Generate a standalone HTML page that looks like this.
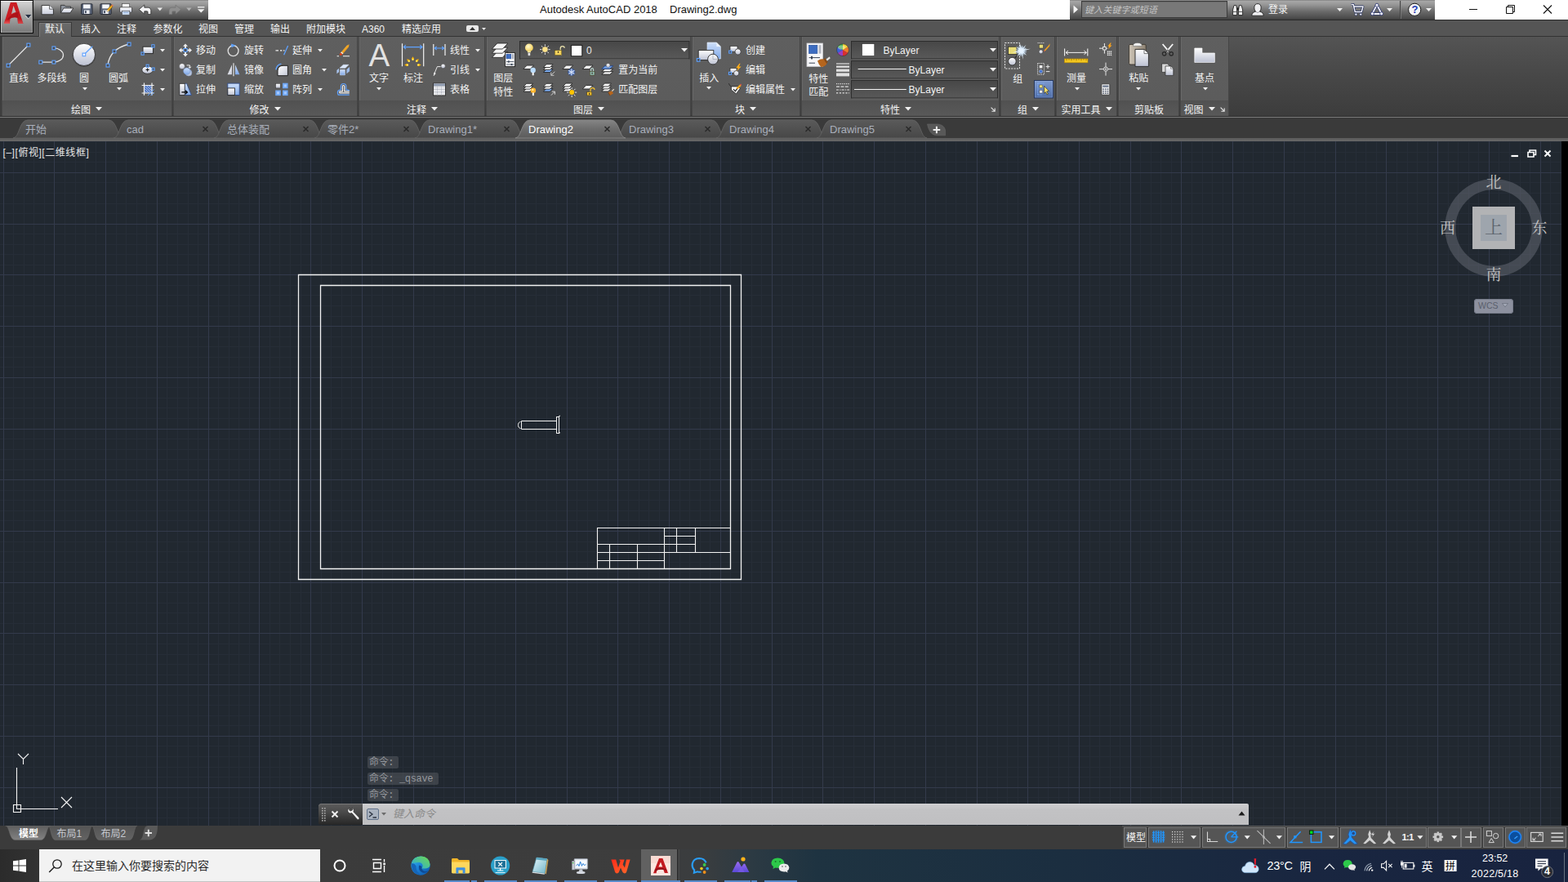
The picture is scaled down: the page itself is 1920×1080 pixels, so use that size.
<!DOCTYPE html>
<html lang="zh-CN"><head><meta charset="utf-8"><title>Autodesk AutoCAD 2018 - Drawing2.dwg</title>
<style>
html,body{margin:0;padding:0;}
body{width:1920px;height:1080px;overflow:hidden;position:relative;background:#212830;font-family:"Liberation Sans","Noto Sans CJK SC",sans-serif;}
.a{position:absolute;display:block;}
.t{position:absolute;white-space:nowrap;font-family:"Liberation Sans","Noto Sans CJK SC",sans-serif;}
svg{overflow:visible;}
</style></head>
<body>
<div class="a" style="left:0px;top:0px;width:1920px;height:24px;background:#fff;"></div>
<div class="a" style="left:40px;top:0px;width:215px;height:24px;background:linear-gradient(#6e6e6e 0,#a9a9a9 1px,#959595 6px,#6a6a6a 14px,#4c4c4c 22px,#3c3c3c 24px);"></div>
<span class="t" style="left:661px;top:4px;font-size:13px;line-height:16px;color:#111;">Autodesk AutoCAD 2018</span>
<span class="t" style="left:820px;top:4px;font-size:13px;line-height:16px;color:#111;">Drawing2.dwg</span>
<div class="a" style="left:1310px;top:0px;width:447px;height:24px;background:linear-gradient(#6e6e6e 0,#a9a9a9 1px,#959595 6px,#6a6a6a 14px,#4c4c4c 22px,#3c3c3c 24px);"></div>
<div class="a" style="left:1324px;top:1px;width:179px;height:21px;background:#787878;border:1px solid #3c3c3c;box-sizing:border-box;box-shadow:inset 0 1px 0 #6a6a6a;"></div>
<svg class="a" style="left:1313px;top:6px;" width="8" height="11" viewBox="0 0 8 11"><path d="M1.5 0.5V10.5L7 5.5Z" fill="#f4f4f4"/></svg>
<span class="t" style="left:1328px;top:4px;font-size:11px;line-height:16px;color:#c4c4c4;font-style:italic;letter-spacing:0.1px;">键入关键字或短语</span>
<span class="t" style="left:1553px;top:4px;font-size:12px;line-height:16px;color:#f0f0f0;">登录</span>
<svg class="a" style="left:1637.0px;top:10.0px;" width="7" height="4" viewBox="0 0 7 4"><path d="M0 0H7L3.5 4Z" fill="#f0f0f0"/></svg>
<svg class="a" style="left:1698.0px;top:10.0px;" width="7" height="4" viewBox="0 0 7 4"><path d="M0 0H7L3.5 4Z" fill="#f0f0f0"/></svg>
<svg class="a" style="left:1746.0px;top:10.0px;" width="7" height="4" viewBox="0 0 7 4"><path d="M0 0H7L3.5 4Z" fill="#f0f0f0"/></svg>
<div class="a" style="left:1714px;top:1px;width:1px;height:22px;background:#444;"></div>
<div class="a" style="left:1715px;top:1px;width:1px;height:22px;background:#8a8a8a;opacity:.6;"></div>
<svg class="a" style="left:1790px;top:0px;" width="130" height="24" viewBox="0 0 130 24"><path d="M9 11.5H19" stroke="#111" stroke-width="1" fill="none"/><path d="M54.5 8.5H62.5V16.5H54.5Z M56.5 8.5V6.5H64.5V14.5H62.5" stroke="#111" stroke-width="1" fill="none"/><path d="M100 6.5L110 16.5M110 6.5L100 16.5" stroke="#111" stroke-width="1.1" fill="none"/></svg>
<div class="a" style="left:0px;top:24px;width:1920px;height:21px;background:#555555;border-top:1px solid #2c2c2c;border-bottom:1px solid #333;box-sizing:border-box;"></div>
<div class="a" style="left:47px;top:27px;width:41px;height:18px;background:linear-gradient(#6b6b6b,#5f5f5f);border:1px solid #3a3a3a;border-bottom:none;box-sizing:border-box;box-shadow:inset 1px 1px 0 #7d7d7d;"></div>
<span class="t" style="left:55px;top:28px;font-size:12px;line-height:16px;color:#f2f2f2;">默认</span>
<span class="t" style="left:99px;top:28px;font-size:12px;line-height:16px;color:#f2f2f2;">插入</span>
<span class="t" style="left:143px;top:28px;font-size:12px;line-height:16px;color:#f2f2f2;">注释</span>
<span class="t" style="left:187.5px;top:28px;font-size:12px;line-height:16px;color:#f2f2f2;">参数化</span>
<span class="t" style="left:243px;top:28px;font-size:12px;line-height:16px;color:#f2f2f2;">视图</span>
<span class="t" style="left:287px;top:28px;font-size:12px;line-height:16px;color:#f2f2f2;">管理</span>
<span class="t" style="left:331px;top:28px;font-size:12px;line-height:16px;color:#f2f2f2;">输出</span>
<span class="t" style="left:375px;top:28px;font-size:12px;line-height:16px;color:#f2f2f2;">附加模块</span>
<span class="t" style="left:443px;top:28px;font-size:12px;line-height:16px;color:#f2f2f2;">A360</span>
<span class="t" style="left:492px;top:28px;font-size:12px;line-height:16px;color:#f2f2f2;">精选应用</span>
<div class="a" style="left:571px;top:31px;width:15px;height:8px;background:#e8e8e8;border-radius:2px;"></div>
<svg class="a" style="left:575px;top:33px;" width="7" height="4" viewBox="0 0 7 4"><path d="M0 4H7L3.5 0Z" fill="#333"/></svg>
<svg class="a" style="left:590.0px;top:34.0px;" width="5" height="3" viewBox="0 0 5 3"><path d="M0 0H5L2.5 3Z" fill="#e8e8e8"/></svg>
<div class="a" style="left:0px;top:0px;width:41px;height:41px;background:#0a0a0a;"></div>
<div class="a" style="left:1px;top:1px;width:39px;height:39px;background:linear-gradient(#d6d6d6,#a4a4a4 50%,#787878);box-shadow:inset 0 1px 0 #f6f6f6, inset 1px 0 0 #c4c4c4, inset -1px -1px 0 #959595;"></div>
<svg class="a" style="left:0px;top:0px;" width="41" height="41" viewBox="0 0 41 41"><defs><linearGradient id="ag" x1="0" y1="0" x2="1" y2="1"><stop offset="0" stop-color="#d0242a"/><stop offset=".55" stop-color="#c61b21"/><stop offset="1" stop-color="#aa141a"/></linearGradient><linearGradient id="ag2" x1="0" y1="0" x2="0" y2="1"><stop offset="0" stop-color="#c8191f"/><stop offset="1" stop-color="#f07070"/></linearGradient></defs><path d="M12.8 2.9H20.3L28.4 29.1H22.1L21.2 21.9Q16 20.4 12.5 22.7L11.8 29.1H4.9Z M16.5 7L14 17.2Q16.4 15.2 19.5 15Z" fill="url(#ag)" fill-rule="evenodd"/><path d="M8.6 23.4Q14.6 16.4 22.6 14.4L22.2 21.6Q16 19.6 9.6 24.6Z" fill="#a81218" opacity=".85"/><path d="M6.2 24.4L11.9 24L11.8 29.1H4.9Z" fill="url(#ag2)" opacity=".8"/><path d="M22 23L26.6 23.4L28.4 29.1H22.1Z" fill="url(#ag2)" opacity=".6"/><path d="M30.8 19H38.2L34.5 23.6Z" fill="#f4f4f4" opacity=".9"/></svg>
<svg class="a" style="left:30.8px;top:17.900000000000002px;" width="7.4" height="4.4" viewBox="0 0 7.4 4.4"><path d="M0 0H7.4L3.7 4.4Z" fill="#283244"/></svg>
<div class="a" style="left:0px;top:45px;width:1920px;height:98px;background:linear-gradient(#545454,#474747 50%,#3c3c3c);"></div>
<div class="a" style="left:0px;top:45px;width:2px;height:97px;background:#3e3e3e;"></div>
<div class="a" style="left:0px;top:143px;width:1920px;height:1px;background:#7c7c7c;"></div>
<div class="a" style="left:0px;top:142px;width:1920px;height:1px;background:#2e2e2e;"></div>
<div class="a" style="left:2px;top:45px;width:209px;height:97px;background:linear-gradient(#5f5f5f,#5b5b5b);box-sizing:border-box;border-left:1px solid #484848;border-right:1px solid #454545;box-shadow:inset 1px 0 0 #696969;"></div>
<div class="a" style="left:3px;top:123px;width:207px;height:19px;background:linear-gradient(#515151,#595959);"></div>
<span class="t" style="left:87.0px;top:126.6px;font-size:12px;line-height:16px;color:#f2f2f2;">绘图</span>
<svg class="a" style="left:117.0px;top:130.75px;" width="8" height="4.5" viewBox="0 0 8 4.5"><path d="M0 0H8L4.0 4.5Z" fill="#f0f0f0"/></svg>
<div class="a" style="left:212px;top:45px;width:225.5px;height:97px;background:linear-gradient(#5f5f5f,#5b5b5b);box-sizing:border-box;border-left:1px solid #484848;border-right:1px solid #454545;box-shadow:inset 1px 0 0 #696969;"></div>
<div class="a" style="left:213px;top:123px;width:223.5px;height:19px;background:linear-gradient(#515151,#595959);"></div>
<span class="t" style="left:305.5px;top:126.6px;font-size:12px;line-height:16px;color:#f2f2f2;">修改</span>
<svg class="a" style="left:336.0px;top:130.75px;" width="8" height="4.5" viewBox="0 0 8 4.5"><path d="M0 0H8L4.0 4.5Z" fill="#f0f0f0"/></svg>
<div class="a" style="left:438.5px;top:45px;width:155.5px;height:97px;background:linear-gradient(#5f5f5f,#5b5b5b);box-sizing:border-box;border-left:1px solid #484848;border-right:1px solid #454545;box-shadow:inset 1px 0 0 #696969;"></div>
<div class="a" style="left:439.5px;top:123px;width:153.5px;height:19px;background:linear-gradient(#515151,#595959);"></div>
<span class="t" style="left:498.0px;top:126.6px;font-size:12px;line-height:16px;color:#f2f2f2;">注释</span>
<svg class="a" style="left:528.0px;top:130.75px;" width="8" height="4.5" viewBox="0 0 8 4.5"><path d="M0 0H8L4.0 4.5Z" fill="#f0f0f0"/></svg>
<div class="a" style="left:595px;top:45px;width:251px;height:97px;background:linear-gradient(#5f5f5f,#5b5b5b);box-sizing:border-box;border-left:1px solid #484848;border-right:1px solid #454545;box-shadow:inset 1px 0 0 #696969;"></div>
<div class="a" style="left:596px;top:123px;width:249px;height:19px;background:linear-gradient(#515151,#595959);"></div>
<span class="t" style="left:702.0px;top:126.6px;font-size:12px;line-height:16px;color:#f2f2f2;">图层</span>
<svg class="a" style="left:732.0px;top:130.75px;" width="8" height="4.5" viewBox="0 0 8 4.5"><path d="M0 0H8L4.0 4.5Z" fill="#f0f0f0"/></svg>
<div class="a" style="left:847px;top:45px;width:132.5px;height:97px;background:linear-gradient(#5f5f5f,#5b5b5b);box-sizing:border-box;border-left:1px solid #484848;border-right:1px solid #454545;box-shadow:inset 1px 0 0 #696969;"></div>
<div class="a" style="left:848px;top:123px;width:130.5px;height:19px;background:linear-gradient(#515151,#595959);"></div>
<span class="t" style="left:900.0px;top:126.6px;font-size:12px;line-height:16px;color:#f2f2f2;">块</span>
<svg class="a" style="left:918.0px;top:130.75px;" width="8" height="4.5" viewBox="0 0 8 4.5"><path d="M0 0H8L4.0 4.5Z" fill="#f0f0f0"/></svg>
<div class="a" style="left:980.5px;top:45px;width:243.0px;height:97px;background:linear-gradient(#5f5f5f,#5b5b5b);box-sizing:border-box;border-left:1px solid #484848;border-right:1px solid #454545;box-shadow:inset 1px 0 0 #696969;"></div>
<div class="a" style="left:981.5px;top:123px;width:241.0px;height:19px;background:linear-gradient(#515151,#595959);"></div>
<span class="t" style="left:1078.0px;top:126.6px;font-size:12px;line-height:16px;color:#f2f2f2;">特性</span>
<svg class="a" style="left:1108.0px;top:130.75px;" width="8" height="4.5" viewBox="0 0 8 4.5"><path d="M0 0H8L4.0 4.5Z" fill="#f0f0f0"/></svg>
<svg class="a" style="left:1212.5px;top:130.5px;" width="6" height="6" viewBox="0 0 6 6"><path d="M0.6 0.6L4.8 4.8M5.2 1.4V5.2H1.4" stroke="#e8e8e8" stroke-width="1.1" fill="none"/></svg>
<div class="a" style="left:1224.5px;top:45px;width:67.5px;height:97px;background:linear-gradient(#5f5f5f,#5b5b5b);box-sizing:border-box;border-left:1px solid #484848;border-right:1px solid #454545;box-shadow:inset 1px 0 0 #696969;"></div>
<div class="a" style="left:1225.5px;top:123px;width:65.5px;height:19px;background:linear-gradient(#515151,#595959);"></div>
<span class="t" style="left:1246.0px;top:126.6px;font-size:12px;line-height:16px;color:#f2f2f2;">组</span>
<svg class="a" style="left:1264.0px;top:130.75px;" width="8" height="4.5" viewBox="0 0 8 4.5"><path d="M0 0H8L4.0 4.5Z" fill="#f0f0f0"/></svg>
<div class="a" style="left:1293px;top:45px;width:75px;height:97px;background:linear-gradient(#5f5f5f,#5b5b5b);box-sizing:border-box;border-left:1px solid #484848;border-right:1px solid #454545;box-shadow:inset 1px 0 0 #696969;"></div>
<div class="a" style="left:1294px;top:123px;width:73px;height:19px;background:linear-gradient(#515151,#595959);"></div>
<span class="t" style="left:1299.5px;top:126.6px;font-size:12px;line-height:16px;color:#f2f2f2;">实用工具</span>
<svg class="a" style="left:1354.0px;top:130.75px;" width="8" height="4.5" viewBox="0 0 8 4.5"><path d="M0 0H8L4.0 4.5Z" fill="#f0f0f0"/></svg>
<div class="a" style="left:1369px;top:45px;width:75px;height:97px;background:linear-gradient(#5f5f5f,#5b5b5b);box-sizing:border-box;border-left:1px solid #484848;border-right:1px solid #454545;box-shadow:inset 1px 0 0 #696969;"></div>
<div class="a" style="left:1370px;top:123px;width:73px;height:19px;background:linear-gradient(#515151,#595959);"></div>
<span class="t" style="left:1389.0px;top:126.6px;font-size:12px;line-height:16px;color:#f2f2f2;">剪贴板</span>
<div class="a" style="left:1445px;top:45px;width:60px;height:97px;background:linear-gradient(#5f5f5f,#5b5b5b);box-sizing:border-box;border-left:1px solid #484848;border-right:1px solid #454545;box-shadow:inset 1px 0 0 #696969;"></div>
<div class="a" style="left:1446px;top:123px;width:58px;height:19px;background:linear-gradient(#515151,#595959);"></div>
<span class="t" style="left:1449.5px;top:126.6px;font-size:12px;line-height:16px;color:#f2f2f2;">视图</span>
<svg class="a" style="left:1480.0px;top:130.75px;" width="8" height="4.5" viewBox="0 0 8 4.5"><path d="M0 0H8L4.0 4.5Z" fill="#f0f0f0"/></svg>
<svg class="a" style="left:1494px;top:130.5px;" width="6" height="6" viewBox="0 0 6 6"><path d="M0.6 0.6L4.8 4.8M5.2 1.4V5.2H1.4" stroke="#e8e8e8" stroke-width="1.1" fill="none"/></svg>
<div class="a" style="left:0px;top:144px;width:1920px;height:26px;background:#3a3a3a;"></div>
<div class="a" style="left:0px;top:169px;width:1920px;height:4px;background:linear-gradient(#5a5a5a,#686868);"></div>
<svg class="a" style="left:0px;top:146px;" width="1920" height="24" viewBox="0 0 1920 24"><defs><linearGradient id="ft0" x1="0" y1="0" x2="0" y2="1"><stop offset="0" stop-color="#5a5a5a"/><stop offset="1" stop-color="#474747"/></linearGradient><linearGradient id="ft1" x1="0" y1="0" x2="0" y2="1"><stop offset="0" stop-color="#858585"/><stop offset=".5" stop-color="#6c6c6c"/><stop offset="1" stop-color="#5c5c5c"/></linearGradient></defs><path d="M16 23 C24 23 23 1 34 1 H133 C144 1 143 23 151 23 Z" fill="url(#ft0)" stroke="#646464" stroke-width="0.8"/><path d="M139 23 C147 23 146 1 157 1 H256 C267 1 266 23 274 23 Z" fill="url(#ft0)" stroke="#646464" stroke-width="0.8"/><path d="M262 23 C270 23 269 1 280 1 H379 C390 1 389 23 397 23 Z" fill="url(#ft0)" stroke="#646464" stroke-width="0.8"/><path d="M385 23 C393 23 392 1 403 1 H502 C513 1 512 23 520 23 Z" fill="url(#ft0)" stroke="#646464" stroke-width="0.8"/><path d="M508 23 C516 23 515 1 526 1 H625 C636 1 635 23 643 23 Z" fill="url(#ft0)" stroke="#646464" stroke-width="0.8"/><path d="M754 23 C762 23 761 1 772 1 H871 C882 1 881 23 889 23 Z" fill="url(#ft0)" stroke="#646464" stroke-width="0.8"/><path d="M877 23 C885 23 884 1 895 1 H994 C1005 1 1004 23 1012 23 Z" fill="url(#ft0)" stroke="#646464" stroke-width="0.8"/><path d="M1000 23 C1008 23 1007 1 1018 1 H1117 C1128 1 1127 23 1135 23 Z" fill="url(#ft0)" stroke="#646464" stroke-width="0.8"/><path d="M631 23 C639 23 638 1 649 1 H748 C759 1 758 23 766 23 Z" fill="url(#ft1)" stroke="#8c8c8c" stroke-width="0.8"/><path d="M1135.5 6 H1147 C1153.5 6 1157.6 9.6 1157.6 15 V19.8 H1147.5 C1140.5 19.8 1137.2 14 1135.5 6Z" fill="#585858" stroke="#676767" stroke-width=".6"/><path d="M1142.6 13H1151.2M1146.9 8.7V17.3" stroke="#ececec" stroke-width="2"/><path d="M248.5 9L254.5 15M254.5 9L248.5 15" stroke="#2a2a2a" stroke-width="1.5"/><path d="M371.5 9L377.5 15M377.5 9L371.5 15" stroke="#2a2a2a" stroke-width="1.5"/><path d="M494.5 9L500.5 15M500.5 9L494.5 15" stroke="#2a2a2a" stroke-width="1.5"/><path d="M617.5 9L623.5 15M623.5 9L617.5 15" stroke="#2a2a2a" stroke-width="1.5"/><path d="M740.5 9L746.5 15M746.5 9L740.5 15" stroke="#2a2a2a" stroke-width="1.5"/><path d="M863.5 9L869.5 15M869.5 9L863.5 15" stroke="#2a2a2a" stroke-width="1.5"/><path d="M986.5 9L992.5 15M992.5 9L986.5 15" stroke="#2a2a2a" stroke-width="1.5"/><path d="M1109.5 9L1115.5 15M1115.5 9L1109.5 15" stroke="#2a2a2a" stroke-width="1.5"/></svg>
<span class="t" style="left:31px;top:151px;font-size:13px;line-height:16px;color:#a9afbb;">开始</span>
<span class="t" style="left:155px;top:151px;font-size:13px;line-height:16px;color:#a9afbb;">cad</span>
<span class="t" style="left:278px;top:151px;font-size:13px;line-height:16px;color:#a9afbb;">总体装配</span>
<span class="t" style="left:401px;top:151px;font-size:13px;line-height:16px;color:#a9afbb;">零件2*</span>
<span class="t" style="left:524px;top:151px;font-size:13px;line-height:16px;color:#a9afbb;">Drawing1*</span>
<span class="t" style="left:647px;top:151px;font-size:13px;line-height:16px;color:#ffffff;">Drawing2</span>
<span class="t" style="left:770px;top:151px;font-size:13px;line-height:16px;color:#a9afbb;">Drawing3</span>
<span class="t" style="left:893px;top:151px;font-size:13px;line-height:16px;color:#a9afbb;">Drawing4</span>
<span class="t" style="left:1016px;top:151px;font-size:13px;line-height:16px;color:#a9afbb;">Drawing5</span>
<div class="a" style="left:0px;top:173px;width:1920px;height:838px;background:#212830;"></div>
<svg class="a" style="left:0px;top:173px;shape-rendering:auto;" width="1920" height="838" viewBox="0 0 1920 838"><path d="M16.5 0V838M29.5 0V838M41.5 0V838M54.5 0V838M79.5 0V838M92.5 0V838M104.5 0V838M117.5 0V838M142.5 0V838M154.5 0V838M167.5 0V838M179.5 0V838M204.5 0V838M217.5 0V838M230.5 0V838M242.5 0V838M267.5 0V838M280.5 0V838M292.5 0V838M305.5 0V838M330.5 0V838M342.5 0V838M355.5 0V838M368.5 0V838M393.5 0V838M405.5 0V838M418.5 0V838M430.5 0V838M455.5 0V838M468.5 0V838M480.5 0V838M493.5 0V838M518.5 0V838M531.5 0V838M543.5 0V838M556.5 0V838M581.5 0V838M593.5 0V838M606.5 0V838M618.5 0V838M644.5 0V838M656.5 0V838M669.5 0V838M681.5 0V838M706.5 0V838M719.5 0V838M731.5 0V838M744.5 0V838M769.5 0V838M782.5 0V838M794.5 0V838M807.5 0V838M832.5 0V838M844.5 0V838M857.5 0V838M869.5 0V838M894.5 0V838M907.5 0V838M920.5 0V838M932.5 0V838M957.5 0V838M970.5 0V838M982.5 0V838M995.5 0V838M1020.5 0V838M1032.5 0V838M1045.5 0V838M1058.5 0V838M1083.5 0V838M1095.5 0V838M1108.5 0V838M1120.5 0V838M1145.5 0V838M1158.5 0V838M1170.5 0V838M1183.5 0V838M1208.5 0V838M1221.5 0V838M1233.5 0V838M1246.5 0V838M1271.5 0V838M1283.5 0V838M1296.5 0V838M1308.5 0V838M1334.5 0V838M1346.5 0V838M1359.5 0V838M1371.5 0V838M1396.5 0V838M1409.5 0V838M1421.5 0V838M1434.5 0V838M1459.5 0V838M1472.5 0V838M1484.5 0V838M1497.5 0V838M1522.5 0V838M1534.5 0V838M1547.5 0V838M1559.5 0V838M1584.5 0V838M1597.5 0V838M1610.5 0V838M1622.5 0V838M1647.5 0V838M1660.5 0V838M1672.5 0V838M1685.5 0V838M1710.5 0V838M1723.5 0V838M1735.5 0V838M1748.5 0V838M1773.5 0V838M1785.5 0V838M1798.5 0V838M1810.5 0V838M1835.5 0V838M1848.5 0V838M1861.5 0V838M1873.5 0V838M1898.5 0V838M1911.5 0V838M0 0.5H1912M0 13.5H1912M0 25.5H1912M0 50.5H1912M0 63.5H1912M0 76.5H1912M0 88.5H1912M0 113.5H1912M0 126.5H1912M0 138.5H1912M0 151.5H1912M0 176.5H1912M0 188.5H1912M0 201.5H1912M0 214.5H1912M0 239.5H1912M0 251.5H1912M0 264.5H1912M0 276.5H1912M0 301.5H1912M0 314.5H1912M0 326.5H1912M0 339.5H1912M0 364.5H1912M0 377.5H1912M0 389.5H1912M0 402.5H1912M0 427.5H1912M0 439.5H1912M0 452.5H1912M0 464.5H1912M0 490.5H1912M0 502.5H1912M0 515.5H1912M0 527.5H1912M0 552.5H1912M0 565.5H1912M0 577.5H1912M0 590.5H1912M0 615.5H1912M0 628.5H1912M0 640.5H1912M0 653.5H1912M0 678.5H1912M0 690.5H1912M0 703.5H1912M0 715.5H1912M0 740.5H1912M0 753.5H1912M0 766.5H1912M0 778.5H1912M0 803.5H1912M0 816.5H1912M0 828.5H1912" stroke="#262d37" stroke-width="1" fill="none"/><path d="M4.5 0V838M66.5 0V838M129.5 0V838M192.5 0V838M255.5 0V838M317.5 0V838M380.5 0V838M443.5 0V838M506.5 0V838M568.5 0V838M631.5 0V838M694.5 0V838M756.5 0V838M819.5 0V838M882.5 0V838M945.5 0V838M1007.5 0V838M1070.5 0V838M1133.5 0V838M1196.5 0V838M1258.5 0V838M1321.5 0V838M1384.5 0V838M1446.5 0V838M1509.5 0V838M1572.5 0V838M1635.5 0V838M1697.5 0V838M1760.5 0V838M1823.5 0V838M1886.5 0V838M0 38.5H1912M0 101.5H1912M0 163.5H1912M0 226.5H1912M0 289.5H1912M0 352.5H1912M0 414.5H1912M0 477.5H1912M0 540.5H1912M0 602.5H1912M0 665.5H1912M0 728.5H1912M0 791.5H1912" stroke="#333a4b" stroke-width="1" fill="none"/><path d="M365.5 163.5H907.5V536.5H365.5ZM392.5 176.5H894.5V523.5H392.5Z" stroke="#f2f2f2" stroke-width="1.3" fill="none"/><path d="M731.5 523.5V473.5H894.5M813.5 473.5V523.5M828.5 473.5V503.5M851.5 473.5V503.5M813.5 483.5H851.5M731.5 493.5H851.5M731.5 503.5H894.5M731.5 513.5H813.5M746.5 493.5V523.5M780.5 493.5V523.5" stroke="#f2f2f2" stroke-width="1.1" fill="none"/><path d="M638.5 342.5H681.5M638.5 352.5H681.5M638.5 342.5V352.5M637.5 343.5C633.5 343.5 633.5 351.5 637.5 351.5M681.5 337V358M684.5 337V358M681.5 337.5H684.5M681.5 357.5H684.5M684 337L686 336M684 358L686 356.5" stroke="#f2f2f2" stroke-width="1" fill="none"/><path d="M20.5 767V817.5H71M16.5 812.5H25.5V821.5H16.5ZM22 750L28.5 756.5L35 750M28.5 756.5V763M75 803L88 816M88 803L75 816" stroke="#f4f4f4" stroke-width="1.1" fill="none"/></svg>
<div class="a" style="left:1912px;top:173px;width:8px;height:838px;background:#000;"></div>
<span class="t" style="left:3.5px;top:179.3px;font-size:12px;line-height:16px;color:#e6e6e6;letter-spacing:0.55px;">[–][俯视][二维线框]</span>
<svg class="a" style="left:1848px;top:181px;" width="56" height="14" viewBox="0 0 56 14"><path d="M2.5 10H11" stroke="#fff" stroke-width="2.2"/><path d="M23 5.5H30V11H23Z M25 5V3H32.5V8.5H30.5" stroke="#fff" stroke-width="1.6" fill="none"/><path d="M43.5 3.5L50.5 10.5M50.5 3.5L43.5 10.5" stroke="#fff" stroke-width="2"/></svg>
<svg class="a" style="left:1764px;top:214px;" width="130" height="130" viewBox="0 0 130 130"><circle cx="65" cy="65" r="53.2" fill="none" stroke="#9aa0aa" stroke-opacity=".29" stroke-width="13"/><rect x="39" y="39" width="52" height="52" fill="#b2b3b5"/><rect x="49" y="49" width="32" height="32" fill="#9ea5ad"/></svg>
<span class="t" style="left:1809.0px;width:40px;text-align:center;top:213px;font-size:19px;line-height:22px;color:#c4c4c4;font-family:'Liberation Serif','Noto Serif CJK SC',serif;">北</span>
<span class="t" style="left:1809.0px;width:40px;text-align:center;top:326px;font-size:19px;line-height:22px;color:#c4c4c4;font-family:'Liberation Serif','Noto Serif CJK SC',serif;">南</span>
<span class="t" style="left:1752.5px;width:40px;text-align:center;top:269px;font-size:19px;line-height:22px;color:#c4c4c4;font-family:'Liberation Serif','Noto Serif CJK SC',serif;">西</span>
<span class="t" style="left:1865.0px;width:40px;text-align:center;top:269px;font-size:19px;line-height:22px;color:#c4c4c4;font-family:'Liberation Serif','Noto Serif CJK SC',serif;">东</span>
<span class="t" style="left:1809.0px;width:40px;text-align:center;top:266px;font-size:22px;line-height:26px;color:#5d646e;font-family:'Liberation Serif','Noto Serif CJK SC',serif;">上</span>
<div class="a" style="left:1805px;top:366px;width:48px;height:17.5px;background:#8d919f;border-radius:4px;box-shadow:inset 0 0 0 1px #777c8a;"></div>
<span class="t" style="left:1810px;top:367px;font-size:10.5px;line-height:15px;color:#5a5f6c;">WCS</span>
<svg class="a" style="left:1839px;top:371px;" width="8" height="6" viewBox="0 0 8 6"><path d="M0.5 0.5H7.5L4 5Z" fill="#a3a8b6" stroke="#666b78" stroke-width=".7"/></svg>
<div class="a" style="left:450px;top:926px;width:37.5px;height:15px;background:rgba(125,128,132,.30);border-radius:2.5px;"></div>
<span class="t" style="left:452px;top:925.5px;font-size:12px;line-height:16px;color:#94979c;font-family:'Liberation Mono','Noto Sans CJK SC',monospace;letter-spacing:-0.35px;">命令:</span>
<div class="a" style="left:450px;top:946px;width:86.5px;height:15px;background:rgba(125,128,132,.30);border-radius:2.5px;"></div>
<span class="t" style="left:452px;top:945.5px;font-size:12px;line-height:16px;color:#94979c;font-family:'Liberation Mono','Noto Sans CJK SC',monospace;letter-spacing:-0.35px;">命令: _qsave</span>
<div class="a" style="left:450px;top:966px;width:37.5px;height:15px;background:rgba(125,128,132,.30);border-radius:2.5px;"></div>
<span class="t" style="left:452px;top:965.5px;font-size:12px;line-height:16px;color:#94979c;font-family:'Liberation Mono','Noto Sans CJK SC',monospace;letter-spacing:-0.35px;">命令:</span>
<div class="a" style="left:390px;top:984px;width:54.5px;height:26px;background:linear-gradient(#5c5c5c,#4a4a4a 40%,#262626);border-radius:4px 0 0 3px;box-shadow:inset 0 1px 0 #767676;"></div>
<div class="a" style="left:444px;top:984px;width:1084.5px;height:26px;background:linear-gradient(#cfcfd1,#c2c2c4 30%,#bfbfc1);border-radius:0 2px 0 0;"></div>
<svg class="a" style="left:394px;top:989px;" width="6" height="18" viewBox="0 0 6 18"><rect x="0" y="0" width="1.6" height="1.6" fill="#a8a8a8"/><rect x="0" y="3" width="1.6" height="1.6" fill="#a8a8a8"/><rect x="0" y="6" width="1.6" height="1.6" fill="#a8a8a8"/><rect x="0" y="9" width="1.6" height="1.6" fill="#a8a8a8"/><rect x="0" y="12" width="1.6" height="1.6" fill="#a8a8a8"/><rect x="0" y="15" width="1.6" height="1.6" fill="#a8a8a8"/><rect x="3" y="0" width="1.6" height="1.6" fill="#a8a8a8"/><rect x="3" y="3" width="1.6" height="1.6" fill="#a8a8a8"/><rect x="3" y="6" width="1.6" height="1.6" fill="#a8a8a8"/><rect x="3" y="9" width="1.6" height="1.6" fill="#a8a8a8"/><rect x="3" y="12" width="1.6" height="1.6" fill="#a8a8a8"/><rect x="3" y="15" width="1.6" height="1.6" fill="#a8a8a8"/></svg>
<svg class="a" style="left:405px;top:992px;" width="10" height="10" viewBox="0 0 10 10"><path d="M1.5 1.5L8.5 8.5M8.5 1.5L1.5 8.5" stroke="#f0f0f0" stroke-width="1.9"/></svg>
<svg class="a" style="left:425px;top:988px;" width="16" height="17" viewBox="0 0 16 17"><path d="M3 1.2 A3.6 3.6 0 0 0 1.4 6.6 A3.6 3.6 0 0 0 5.8 7.6 L12.2 15 A1.5 1.5 0 0 0 14.6 13 L7.8 6 A3.6 3.6 0 0 0 6.2 1 L6.6 3.8 L4.6 5 L2.6 4 Z" fill="#f4f4f4" stroke="#1e1e1e" stroke-width=".6"/></svg>
<div class="a" style="left:449px;top:990px;width:15px;height:14px;background:#a9b2bf;border:1px solid #63738b;border-radius:2px;box-sizing:border-box;"></div>
<svg class="a" style="left:451px;top:993px;" width="11" height="9" viewBox="0 0 11 9"><path d="M1 1L5 4L1 7M5.5 8H10" stroke="#2c3340" stroke-width="1.3" fill="none"/></svg>
<svg class="a" style="left:467.0px;top:994.75px;" width="6" height="3.5" viewBox="0 0 6 3.5"><path d="M0 0H6L3.0 3.5Z" fill="#6b6b6b"/></svg>
<span class="t" style="left:481px;top:988px;font-size:13px;line-height:17px;color:#8a8a8a;font-style:italic;">键入命令</span>
<svg class="a" style="left:1516px;top:993px;" width="9" height="6" viewBox="0 0 9 6"><path d="M0.5 5.5H8.5L4.5 0.5Z" fill="#1a1a1a"/></svg>
<div class="a" style="left:0px;top:1011px;width:1920px;height:29px;background:#3b3b3b;"></div>
<svg class="a" style="left:0px;top:1011px;overflow:hidden;" width="200" height="19" viewBox="0 0 200 19"><defs><linearGradient id="lt1" x1="0" y1="0" x2="0" y2="1"><stop offset="0" stop-color="#5e5e5e"/><stop offset="1" stop-color="#828282"/></linearGradient><linearGradient id="lt0" x1="0" y1="0" x2="0" y2="1"><stop offset="0" stop-color="#545454"/><stop offset="1" stop-color="#636363"/></linearGradient></defs><path d="M58.5 0 C62.625 0 61.875 17.6 68.0 17.6 H104.0 C110.125 17.6 109.375 0 113.5 0 Z" fill="url(#lt0)" stroke="#6a6a6a" stroke-width=".5"/><path d="M112 0 C116.125 0 115.375 17.6 121.5 17.6 H158.5 C164.625 17.6 163.875 0 168 0 Z" fill="url(#lt0)" stroke="#6a6a6a" stroke-width=".5"/><path d="M170.6 17.4 C177 17.4 174 0 181 0 H193 C193 11 190 17.4 183 17.4Z" fill="#595959"/><path d="M6.5 0 C12.0 0 11.0 17.6 18.5 17.6 H50 C57.5 17.6 56.5 0 62 0 Z" fill="url(#lt1)" stroke="#6a6a6a" stroke-width=".5"/><path d="M177.6 9H186M181.8 4.8V13.2" stroke="#e0e0e0" stroke-width="1.9"/></svg>
<span class="t" style="left:23px;top:1013px;font-size:12px;line-height:16px;color:#ffffff;font-weight:bold;">模型</span>
<span class="t" style="left:69.5px;top:1013px;font-size:12px;line-height:16px;color:#c6c9d0;">布局1</span>
<span class="t" style="left:123.5px;top:1013px;font-size:12px;line-height:16px;color:#c6c9d0;">布局2</span>
<div class="a" style="left:1374px;top:1011px;width:546px;height:28px;background:#414141;border-top:1px solid #5c5c5c;box-sizing:border-box;"></div>
<div class="a" style="left:1375.5px;top:1012.5px;width:28.5px;height:25px;background:#555555;box-shadow:inset 0 0 0 1px #787878;"></div>
<div class="a" style="left:1405.5px;top:1012.5px;width:64.5px;height:25px;background:#555555;box-shadow:inset 0 0 0 1px #787878;"></div>
<div class="a" style="left:1471.5px;top:1012.5px;width:102.5px;height:25px;background:#555555;box-shadow:inset 0 0 0 1px #787878;"></div>
<div class="a" style="left:1575.5px;top:1012.5px;width:63.5px;height:25px;background:#555555;box-shadow:inset 0 0 0 1px #787878;"></div>
<div class="a" style="left:1640.5px;top:1012.5px;width:106.0px;height:25px;background:#555555;box-shadow:inset 0 0 0 1px #787878;"></div>
<div class="a" style="left:1748px;top:1012.5px;width:40.5px;height:25px;background:#555555;box-shadow:inset 0 0 0 1px #787878;"></div>
<div class="a" style="left:1789px;top:1012.5px;width:24.5px;height:25px;background:#555555;box-shadow:inset 0 0 0 1px #787878;"></div>
<div class="a" style="left:1815.5px;top:1012.5px;width:25.5px;height:25px;background:#555555;box-shadow:inset 0 0 0 1px #787878;"></div>
<div class="a" style="left:1842.5px;top:1012.5px;width:25.0px;height:25px;background:#555555;box-shadow:inset 0 0 0 1px #787878;"></div>
<div class="a" style="left:1869px;top:1012.5px;width:49px;height:25px;background:#555555;box-shadow:inset 0 0 0 1px #787878;"></div>
<span class="t" style="left:1379px;top:1017.5px;font-size:12px;line-height:16px;color:#f4f4f4;">模型</span>
<div class="a" style="left:0px;top:1040px;width:1920px;height:40px;background:linear-gradient(90deg,#2b2b2b 0,#333 48px,#3b3b3b 400px,#3d3d3d 780px,#3a3d3f 860px,#2c3a43 920px,#1e3341 1000px,#1b2e40 1300px,#192640 1600px,#18233f 1920px);"></div>
<svg class="a" style="left:16px;top:1052px;" width="16" height="16" viewBox="0 0 16 16"><path d="M0 2.3L6.5 1.4V7.5H0ZM7.5 1.25L16 0V7.5H7.5ZM0 8.5H6.5V14.6L0 13.7ZM7.5 8.5H16V16L7.5 14.75Z" fill="#fff"/></svg>
<div class="a" style="left:48px;top:1040px;width:344px;height:40px;background:#f2f2f2;border-top:1px solid #fafafa;border-bottom:1px solid #c4c4c4;box-sizing:border-box;"></div>
<svg class="a" style="left:59px;top:1051px;" width="18" height="18" viewBox="0 0 18 18"><circle cx="11" cy="7" r="5.2" fill="none" stroke="#1a1a1a" stroke-width="1.3"/><path d="M7.4 10.8L1.2 17" stroke="#1a1a1a" stroke-width="1.4"/></svg>
<span class="t" style="left:88px;top:1050px;font-size:14px;line-height:20px;color:#2a2a2a;">在这里输入你要搜索的内容</span>
<svg class="a" style="left:406px;top:1050px;" width="20" height="20" viewBox="0 0 20 20"><circle cx="10" cy="10" r="6.5" fill="none" stroke="#fff" stroke-width="2"/></svg>
<svg class="a" style="left:454px;top:1051px;" width="20" height="18" viewBox="0 0 20 18"><path d="M2 1.5H13M2 16.5H13M3.5 5.5H12.5V12.5H3.5ZM16.5 1V4.5M16.5 9V17" stroke="#fff" stroke-width="1.4" fill="none"/><rect x="15.3" y="5.6" width="2.6" height="2.6" fill="#fff"/></svg>
<div class="a" style="left:785px;top:1040px;width:44px;height:40px;background:#616161;"></div>
<div class="a" style="left:829px;top:1040px;width:1px;height:40px;background:#2b2b2b;"></div>
<div class="a" style="left:831px;top:1040px;width:1px;height:40px;background:#4a4a4a;"></div>
<div class="a" style="left:544px;top:1078px;width:31px;height:2px;background:#588bcb;"></div>
<div class="a" style="left:576.5px;top:1078px;width:7.0px;height:2px;background:#588bcb;"></div>
<div class="a" style="left:593px;top:1078px;width:40px;height:2px;background:#588bcb;"></div>
<div class="a" style="left:642px;top:1078px;width:40px;height:2px;background:#588bcb;"></div>
<div class="a" style="left:691px;top:1078px;width:40px;height:2px;background:#588bcb;"></div>
<div class="a" style="left:740px;top:1078px;width:40px;height:2px;background:#588bcb;"></div>
<div class="a" style="left:785px;top:1078px;width:48px;height:2px;background:#588bcb;"></div>
<div class="a" style="left:838px;top:1078px;width:40px;height:2px;background:#588bcb;"></div>
<div class="a" style="left:887px;top:1078px;width:31.5px;height:2px;background:#588bcb;"></div>
<div class="a" style="left:919.5px;top:1078px;width:7.5px;height:2px;background:#588bcb;"></div>
<div class="a" style="left:936px;top:1078px;width:40px;height:2px;background:#588bcb;"></div>
<svg class="a" style="left:0px;top:0px;" width="1920" height="146" viewBox="0 0 1920 146"><defs><linearGradient id="gw" x1="0" y1="0" x2="0" y2="1"><stop offset="0" stop-color="#ffffff"/><stop offset="1" stop-color="#bcc1d2"/></linearGradient><linearGradient id="gw2" x1="0" y1="0" x2="1" y2="1"><stop offset="0" stop-color="#ffffff"/><stop offset="1" stop-color="#c4c8d6"/></linearGradient><linearGradient id="gbl" x1="0" y1="0" x2="0" y2="1"><stop offset="0" stop-color="#cfe0fa"/><stop offset="1" stop-color="#7fa8e8"/></linearGradient><linearGradient id="gy" x1="0" y1="0" x2="0" y2="1"><stop offset="0" stop-color="#ffe680"/><stop offset="1" stop-color="#e8b400"/></linearGradient><linearGradient id="gor" x1="0" y1="0" x2="1" y2="1"><stop offset="0" stop-color="#ffd34d"/><stop offset="1" stop-color="#e07800"/></linearGradient><linearGradient id="gcb" x1="0" y1="0" x2="0" y2="1"><stop offset="0" stop-color="#474747"/><stop offset="1" stop-color="#595959"/></linearGradient><linearGradient id="gtan" x1="0" y1="0" x2="1" y2="0"><stop offset="0" stop-color="#cfc6b8"/><stop offset="1" stop-color="#8d8273"/></linearGradient><linearGradient id="gsel" x1="0" y1="0" x2="0" y2="1"><stop offset="0" stop-color="#7f9bd0"/><stop offset="1" stop-color="#4f6ea8"/></linearGradient><radialGradient id="gbulb" cx=".4" cy=".35" r=".7"><stop offset="0" stop-color="#fffbd0"/><stop offset="1" stop-color="#f2c94c"/></radialGradient></defs><path d="M10.1 80.1L34.9 55.1" stroke="#f2f2f2" stroke-width="1.3"/><rect x="8.15" y="78.14999999999999" width="3.9" height="3.9" fill="#4a4a4a" stroke="#5fa2ff" stroke-width="1.1"/><rect x="32.949999999999996" y="53.15" width="3.9" height="3.9" fill="#4a4a4a" stroke="#5fa2ff" stroke-width="1.1"/><path d="M49.8 76.1H65.9A11.6 8.6 0 0 0 65.9 58.9" stroke="#e4e4e4" stroke-width="1.3" fill="none"/><rect x="47.849999999999994" y="74.14999999999999" width="3.9" height="3.9" fill="#4a4a4a" stroke="#5fa2ff" stroke-width="1.1"/><rect x="63.95" y="74.14999999999999" width="3.9" height="3.9" fill="#4a4a4a" stroke="#5fa2ff" stroke-width="1.1"/><rect x="63.95" y="56.949999999999996" width="3.9" height="3.9" fill="#4a4a4a" stroke="#5fa2ff" stroke-width="1.1"/><circle cx="102.9" cy="67.4" r="14.3" fill="#2a2a2a" opacity=".55"/><circle cx="102.9" cy="66.9" r="13.6" fill="url(#gw)" stroke="#303030" stroke-width=".8"/><path d="M102.9 66.9L113.2 56.8" stroke="#5fa2ff" stroke-width="1.3"/><rect x="101.10000000000001" y="65.10000000000001" width="3.6" height="3.6" fill="#f8f8ff" stroke="#5fa2ff" stroke-width="1.1"/><path d="M132 80Q134 60 158 54" stroke="#e4e4e4" stroke-width="1.3" fill="none"/><rect x="130.05" y="78.14999999999999" width="3.9" height="3.9" fill="#4a4a4a" stroke="#5fa2ff" stroke-width="1.1"/><rect x="138.05" y="60.949999999999996" width="3.9" height="3.9" fill="#4a4a4a" stroke="#5fa2ff" stroke-width="1.1"/><rect x="156.15" y="52.15" width="3.9" height="3.9" fill="#4a4a4a" stroke="#5fa2ff" stroke-width="1.1"/><rect x="175" y="57.2" width="12.4" height="8.4" fill="url(#gw)" stroke="#262626" stroke-width=".9"/><rect x="185.8" y="54.8" width="3.2" height="3.2" fill="#4a4a4a" stroke="#5fa2ff" stroke-width="1.1"/><rect x="173.0" y="63.99999999999999" width="3.2" height="3.2" fill="#4a4a4a" stroke="#5fa2ff" stroke-width="1.1"/><ellipse cx="180.6" cy="85.6" rx="6.8" ry="4.7" fill="url(#gw)" stroke="#2a2a2a" stroke-width=".8"/><path d="M178.6 85.4H182.6M180.6 83.4V87.4" stroke="#1c1c1c" stroke-width="1.1"/><rect x="179.1" y="79.2" width="3" height="3" fill="#4a4a4a" stroke="#5fa2ff" stroke-width="1.1"/><rect x="186.1" y="83.1" width="3" height="3" fill="#4a4a4a" stroke="#5fa2ff" stroke-width="1.1"/><rect x="177" y="105" width="8.6" height="8.6" fill="#3d66b8"/><path d="M185.6 108L182.6 105M185.6 111L179.6 105M185.2 113.6L177 105.4M182.2 113.6L177 108.4M179.2 113.6L177 111.4" stroke="#cfe0ff" stroke-width="1"/><path d="M173.6 104.5H188.6M173.6 114H188.6M176.5 101.4V116.8M186 101.4V116.8" stroke="#f2f2f2" stroke-width="1.2"/><path d="M181 117L188.5 109.5M184.5 117L188.5 113" stroke="#5fa2ff" stroke-width="1"/><g transform="translate(219 53.4)"><path d="M8 0L11 3.4H9V7H12.6V5L16 8L12.6 11V9H9V12.6H11L8 16L5 12.6H7V9H3.4V11L0 8L3.4 5V7H7V3.4H5Z" fill="#ececec"/><rect x="6" y="6" width="4" height="4" fill="#4a4a4a" stroke="#5fa2ff" stroke-width="1.1"/></g><g transform="translate(278 53.4)"><circle cx="7.6" cy="8.8" r="6.4" fill="none" stroke="#dcdcdc" stroke-width="1.4"/><path d="M5 0.2L10.8 2.2L5.6 4.8Z" fill="#5fa2ff"/><rect x="4" y="0" width="2.4" height="5" fill="#5b5b5b" opacity="0"/></g><g transform="translate(337 53.4)"><path d="M0.5 8.5H4M6 8.5H8.4M10 8.5H11.4" stroke="#f2f2f2" stroke-width="1.2"/><path d="M10.6 13.8L15.6 2.6" stroke="#5fa2ff" stroke-width="1.3"/></g><g transform="translate(412 53.4)"><path d="M5.2 11L12.6 2.4L15.6 0.8L15 4.2L7.6 12.8Z" fill="url(#gor)"/><path d="M5.2 11L7.6 12.8L6.4 14.2Q4.8 15 3.8 13.8Q3.4 12.4 4.2 12Z" fill="#d9441a"/><path d="M5.6 10.6L8 12.4" stroke="#f3f3f3" stroke-width="1.3"/><path d="M0.6 15.4H3M8 15.4H16" stroke="#f2f2f2" stroke-width="1.1"/></g><g transform="translate(219 77.3)"><circle cx="3.9" cy="3.9" r="3.5" fill="url(#gw)" stroke="#3c3c3c" stroke-width=".5"/><circle cx="12" cy="11.8" r="3.9" fill="#b9c6de" stroke="#8fa3c8" stroke-width=".6"/><circle cx="9.8" cy="9.8" r="4.2" fill="url(#gbl)" stroke="#7794c8" stroke-width=".6"/><path d="M9.6 2.6H13.4V5.6M11.8 4.4L13.4 6.2L15 4.4" stroke="#f0f0f0" stroke-width="1" fill="none"/></g><g transform="translate(278 77.3)"><path d="M6 2L6 14H0.6Z" fill="url(#gw2)"/><path d="M10 2V14H15.4Z" fill="url(#gbl)"/><path d="M8 0V16" stroke="#f2f2f2" stroke-width="1.1"/></g><g transform="translate(337 77.3)"><path d="M3 15.4V9.5Q3 3 10 3H15.4V15.4Z" fill="url(#gw2)" stroke="#222" stroke-width="1"/><path d="M0.8 8Q1.8 2 7.4 0.8" stroke="#5fa2ff" stroke-width="1.4" fill="none"/></g><g transform="translate(412 77.3)"><path d="M4 6L8.4 2H15L11 6Z" fill="#dbe8fb"/><path d="M0.4 8.6L3 6.4V11L0.4 13Z" fill="#a9c4ee"/><path d="M4.4 8H10.4V14.6H4.4Z" fill="url(#gbl)"/><path d="M12.4 7.6L16 4.6V10L12.4 13Z" fill="#9dbbea"/><path d="M4 6L8.4 2H15L11 6Z M4.4 8H10.4V14.6H4.4Z" fill="none" stroke="#d8e6ff" stroke-width=".5"/></g><g transform="translate(219 101.3)"><path d="M7 1H9.6L15.4 15.2H7Z" fill="url(#gbl)" stroke="#2e4a86" stroke-width=".8"/><rect x="0.8" y="1" width="6.4" height="14.2" fill="url(#gw)" stroke="#2a2a2a" stroke-width=".8"/><path d="M3.4 11.6H9.8M8 9.4L10.4 11.6L8 13.8" stroke="#000" stroke-width="1.2" fill="none"/></g><g transform="translate(278 101.3)"><rect x="0.8" y="0.8" width="14.4" height="14.4" fill="url(#gbl)" stroke="#2e4a86" stroke-width=".9"/><rect x="0.8" y="6.6" width="8.6" height="8.6" fill="url(#gw)" stroke="#2a2a2a" stroke-width=".9"/></g><g transform="translate(337 101.3)"><rect x="0.6" y="1" width="5.6" height="5.6" fill="url(#gw)" stroke="#333" stroke-width=".5"/><rect x="9" y="0.4" width="6.6" height="6.6" fill="#6ea6f4"/><rect x="10.8" y="2.2" width="3" height="3" fill="#a8cbff"/><rect x="0.2" y="9.2" width="6.6" height="6.6" fill="#6ea6f4"/><rect x="2" y="11" width="3" height="3" fill="#a8cbff"/><rect x="9" y="9.2" width="6.6" height="6.6" fill="#6ea6f4"/><rect x="10.8" y="11" width="3" height="3" fill="#a8cbff"/></g><g transform="translate(412 101.3)"><path d="M15.8 14.8H2.2Q0.6 12.6 2.2 9.6Q4 8.6 5.4 8.6V4.6Q5.4 1.2 8.6 1.2Q11.8 1.2 11.8 4.6V8.6Q14 8.6 15.8 9.4" fill="none" stroke="#5fa2ff" stroke-width="1.2"/><path d="M15.8 12.6H4Q3.4 11.4 4 10.6H7.4V4.6Q7.4 3.2 8.6 3.2Q9.8 3.2 9.8 4.6V10.6H15.8" fill="none" stroke="#f4f4f4" stroke-width="1.2"/></g><path d="M492.5 53.2V81.2M518.7 53.2V81.2" stroke="#f2f2f2" stroke-width="1.2"/><path d="M494.4 57.6H516.8M497 55.2L494.2 57.6L497 60M514.2 55.2L517 57.6L514.2 60" stroke="#5fa2ff" stroke-width="1.1" fill="none"/><g transform="translate(505.5 79.4) rotate(-90)"><path d="M0 -10.2L1.5 -7.6Q1.6 -5.4 0 -5.2Q-1.6 -5.4 -1.5 -7.6Z" fill="#ffb300"/><circle cx="0" cy="-6.6" r="1" fill="#fff27a"/></g><g transform="translate(505.5 79.4) rotate(-45)"><path d="M0 -10.2L1.5 -7.6Q1.6 -5.4 0 -5.2Q-1.6 -5.4 -1.5 -7.6Z" fill="#ffb300"/><circle cx="0" cy="-6.6" r="1" fill="#fff27a"/></g><g transform="translate(505.5 79.4) rotate(0)"><path d="M0 -10.2L1.5 -7.6Q1.6 -5.4 0 -5.2Q-1.6 -5.4 -1.5 -7.6Z" fill="#ffb300"/><circle cx="0" cy="-6.6" r="1" fill="#fff27a"/></g><g transform="translate(505.5 79.4) rotate(45)"><path d="M0 -10.2L1.5 -7.6Q1.6 -5.4 0 -5.2Q-1.6 -5.4 -1.5 -7.6Z" fill="#ffb300"/><circle cx="0" cy="-6.6" r="1" fill="#fff27a"/></g><g transform="translate(505.5 79.4) rotate(90)"><path d="M0 -10.2L1.5 -7.6Q1.6 -5.4 0 -5.2Q-1.6 -5.4 -1.5 -7.6Z" fill="#ffb300"/><circle cx="0" cy="-6.6" r="1" fill="#fff27a"/></g><g transform="translate(530 54)"><path d="M0.8 0V14M15 0V14" stroke="#f2f2f2" stroke-width="1.2"/><path d="M2.4 5H13.4M4.6 3L2.2 5L4.6 7M11.2 3L13.6 5L11.2 7" stroke="#5fa2ff" stroke-width="1.1" fill="none"/></g><g transform="translate(530 77)"><path d="M1.2 15.6Q3 10 5.4 4.6H9.8" stroke="#e8e8e8" stroke-width="1" fill="none"/><path d="M0.8 16L1.4 11.6L3.8 13Z" fill="#e8e8e8"/><circle cx="12.6" cy="4" r="2.7" fill="url(#gw)" stroke="#333" stroke-width=".5"/></g><g transform="translate(530 101.4)"><rect x="0.5" y="0.5" width="15" height="15" fill="#f4f4f4" stroke="#2c2c2c" stroke-width=".9"/><rect x="1" y="1" width="14" height="3" fill="#8f9bb0"/><path d="M1 4.5H15M1 8H15M1 11.5H15M5.5 4.5V15M10.5 4.5V15" stroke="#b4b8c2" stroke-width=".9"/><path d="M1 6.2H15M1 9.8H15M1 13.4H15" stroke="#dfe1e8" stroke-width="1.6" opacity=".7"/></g><path d="M608.8 63.4H621.8L615.4 70.4H602.4Z" fill="#f6f6f6" stroke="#1c1c1c" stroke-width=".8"/><path d="M608.8 58.2H621.8L615.4 65.2H602.4Z" fill="#f6f6f6" stroke="#1c1c1c" stroke-width=".8"/><path d="M608.8 53H621.8L615.4 60H602.4Z" fill="#f6f6f6" stroke="#1c1c1c" stroke-width=".8"/><rect x="618.6" y="64.6" width="12" height="17" fill="#f4f4f6" stroke="#222" stroke-width=".9"/><rect x="620" y="66.4" width="5.8" height="5.4" fill="#3f6fc4" stroke="#244a94" stroke-width=".6"/><rect x="627" y="66.2" width="2.2" height="5.8" fill="#a9adb8"/><path d="M620 75.5H629.4M620 79H629.4" stroke="#3a4658" stroke-width=".8"/><rect x="622" y="74.4" width="1.8" height="2.2" fill="#3a4658"/><rect x="625.6" y="77.9" width="1.8" height="2.2" fill="#3a4658"/><rect x="636.5" y="50.5" width="207.5" height="21.5" fill="url(#gcb)" stroke="#2d2d2d" stroke-width="1"/><path d="M637.5 72.6H843.5" stroke="#6e6e6e" stroke-width=".8" fill="none" opacity=".6"/><circle cx="647.9" cy="58.4" r="4.9" fill="url(#gbulb)"/><path d="M645.6 62.4H650.2L649.6 64.6H646.2Z" fill="#f6e7a0"/><rect x="646.4" y="64.6" width="3" height="3.6" rx=".8" fill="#ececec" stroke="#555" stroke-width=".4"/><path d="M0 -4.1V-6.3" transform="translate(667.4 60.6) rotate(0)" stroke="#f4f4f4" stroke-width=".9"/><path d="M0 -4.1V-6.3" transform="translate(667.4 60.6) rotate(45)" stroke="#f4f4f4" stroke-width=".9"/><path d="M0 -4.1V-6.3" transform="translate(667.4 60.6) rotate(90)" stroke="#f4f4f4" stroke-width=".9"/><path d="M0 -4.1V-6.3" transform="translate(667.4 60.6) rotate(135)" stroke="#f4f4f4" stroke-width=".9"/><path d="M0 -4.1V-6.3" transform="translate(667.4 60.6) rotate(180)" stroke="#f4f4f4" stroke-width=".9"/><path d="M0 -4.1V-6.3" transform="translate(667.4 60.6) rotate(225)" stroke="#f4f4f4" stroke-width=".9"/><path d="M0 -4.1V-6.3" transform="translate(667.4 60.6) rotate(270)" stroke="#f4f4f4" stroke-width=".9"/><path d="M0 -4.1V-6.3" transform="translate(667.4 60.6) rotate(315)" stroke="#f4f4f4" stroke-width=".9"/><circle cx="667.4" cy="60.6" r="3.3" fill="#ffe28a"/><path d="M686.2 61.6V59.0Q686.2 56.6 688.8000000000001 56.6Q691.2 56.6 691.2 58.800000000000004" fill="none" stroke="#f0e6b0" stroke-width="1.2"/><rect x="679.2" y="61.6" width="8.6" height="6" fill="#f3d25c" stroke="#3a3000" stroke-width=".4"/><rect x="682.9" y="62.800000000000004" width="1.2" height="2" fill="#3a3020"/><rect x="699.4" y="55.4" width="13.4" height="13.4" fill="#ffffff" stroke="#1c1c1c" stroke-width="1"/><g transform="translate(640.7 77.3)"><path d="M4.4 2.8H12.8L8.6 7.2H0.2Z" fill="#f6f6f6" stroke="#1c1c1c" stroke-width=".8"/><circle cx="12" cy="8.6" r="3.2" fill="#b9dcff"/><rect x="11" y="11.4" width="2" height="3.6" fill="#ffffff"/></g><g transform="translate(664.4 77.3)"><path d="M4.6 7.4H12.6L9 11.2H1Z" fill="#7fb0f5" stroke="#1c1c1c" stroke-width=".8"/><path d="M4.6 4.4H12.6L9 8.2H1Z" fill="#f6f6f6" stroke="#1c1c1c" stroke-width=".8"/><path d="M4.6 1.4H12.6L9 5.199999999999999H1Z" fill="#f6f6f6" stroke="#1c1c1c" stroke-width=".8"/><path d="M15 10.4L10.6 14.8M10.4 11.4V15H14" stroke="#c8c8c8" stroke-width="1" fill="none"/></g><g transform="translate(688.8 77.3)"><path d="M4.4 2.8H12.8L8.6 7.2H0.2Z" fill="#f6f6f6" stroke="#1c1c1c" stroke-width=".8"/><path d="M0 -4.2V4.2M-1.4 -3L0 -1.8L1.4 -3M-1.4 3L0 1.8L1.4 3" transform="translate(11 11) rotate(0)" stroke="#cfe2ff" stroke-width="1" fill="none"/><path d="M0 -4.2V4.2M-1.4 -3L0 -1.8L1.4 -3M-1.4 3L0 1.8L1.4 3" transform="translate(11 11) rotate(60)" stroke="#cfe2ff" stroke-width="1" fill="none"/><path d="M0 -4.2V4.2M-1.4 -3L0 -1.8L1.4 -3M-1.4 3L0 1.8L1.4 3" transform="translate(11 11) rotate(120)" stroke="#cfe2ff" stroke-width="1" fill="none"/><circle cx="11" cy="11" r="4.6" fill="#1f4fae" opacity=".55"/><path d="M0 -4V4" transform="translate(11 11) rotate(0)" stroke="#e8f0ff" stroke-width=".9"/><path d="M0 -4V4" transform="translate(11 11) rotate(60)" stroke="#e8f0ff" stroke-width=".9"/><path d="M0 -4V4" transform="translate(11 11) rotate(120)" stroke="#e8f0ff" stroke-width=".9"/></g><g transform="translate(713.2 77.3)"><path d="M4.4 2.8H12.8L8.6 7.2H0.2Z" fill="#f6f6f6" stroke="#1c1c1c" stroke-width=".8"/><path d="M10.4 10.2V8.399999999999999Q10.4 6.199999999999999 11.9 6.199999999999999Q13.4 6.199999999999999 13.4 8.399999999999999V10.2" fill="none" stroke="#b8d4cc" stroke-width="1.2"/><rect x="9" y="10.2" width="5.8" height="4.6" fill="#8fb9b0" stroke="#3a3000" stroke-width=".4"/><rect x="11.3" y="11.399999999999999" width="1.2" height="2" fill="#3a3020"/></g><g transform="translate(736.2 77.3)"><path d="M4.6 10.4H14.6L10.6 13.8H0.6Z" fill="#f6f6f6" stroke="#1c1c1c" stroke-width=".8"/><path d="M4.6 7H14.6L10.6 10.4H0.6Z" fill="#f6f6f6" stroke="#1c1c1c" stroke-width=".8"/><path d="M4.6 3.4H14.6L10.6 7.0H0.6Z" fill="#6f9fe8" stroke="#1f3f80" stroke-width=".8"/><circle cx="8.4" cy="2.8" r="2.4" fill="url(#gw)" stroke="#555" stroke-width=".4"/></g><g transform="translate(640.7 101.7)"><path d="M4.0 6.6H12.0L8.4 10.399999999999999H0.4Z" fill="#f6f6f6" stroke="#1c1c1c" stroke-width=".8"/><path d="M4.0 3.6H12.0L8.4 7.4H0.4Z" fill="#f6f6f6" stroke="#1c1c1c" stroke-width=".8"/><path d="M4.0 0.6H12.0L8.4 4.3999999999999995H0.4Z" fill="#f6f6f6" stroke="#1c1c1c" stroke-width=".8"/><circle cx="12.2" cy="9" r="3.2" fill="#ffb52e"/><rect x="11.2" y="11.799999999999999" width="2" height="3.6" fill="#ffffff"/><circle cx="11.6" cy="8.2" r="1.2" fill="#ffe9a0"/></g><g transform="translate(664.4 101.7)"><path d="M4.6 6.6H12.6L9 10.399999999999999H1Z" fill="#7fb0f5" stroke="#1c1c1c" stroke-width=".8"/><path d="M4.6 3.6H12.6L9 7.4H1Z" fill="#f6f6f6" stroke="#1c1c1c" stroke-width=".8"/><path d="M4.6 0.6H12.6L9 4.3999999999999995H1Z" fill="#f6f6f6" stroke="#1c1c1c" stroke-width=".8"/><path d="M10.4 15L14.8 10.6M11.4 10.4H15V14" stroke="#d8d8d8" stroke-width="1" fill="none"/></g><g transform="translate(688.8 101.7)"><path d="M4.0 6.4H12.0L8.4 10.2H0.4Z" fill="#f6f6f6" stroke="#1c1c1c" stroke-width=".8"/><path d="M4.0 3.4H12.0L8.4 7.199999999999999H0.4Z" fill="#f6f6f6" stroke="#1c1c1c" stroke-width=".8"/><path d="M4.0 0.4H12.0L8.4 4.2H0.4Z" fill="#f6f6f6" stroke="#1c1c1c" stroke-width=".8"/><path d="M0 -3.8V-6" transform="translate(11.4 11.4) rotate(0)" stroke="#f8f8f8" stroke-width=".9"/><path d="M0 -3.8V-6" transform="translate(11.4 11.4) rotate(45)" stroke="#f8f8f8" stroke-width=".9"/><path d="M0 -3.8V-6" transform="translate(11.4 11.4) rotate(90)" stroke="#f8f8f8" stroke-width=".9"/><path d="M0 -3.8V-6" transform="translate(11.4 11.4) rotate(135)" stroke="#f8f8f8" stroke-width=".9"/><path d="M0 -3.8V-6" transform="translate(11.4 11.4) rotate(180)" stroke="#f8f8f8" stroke-width=".9"/><path d="M0 -3.8V-6" transform="translate(11.4 11.4) rotate(225)" stroke="#f8f8f8" stroke-width=".9"/><path d="M0 -3.8V-6" transform="translate(11.4 11.4) rotate(270)" stroke="#f8f8f8" stroke-width=".9"/><path d="M0 -3.8V-6" transform="translate(11.4 11.4) rotate(315)" stroke="#f8f8f8" stroke-width=".9"/><circle cx="11.4" cy="11.4" r="3" fill="#ffc400"/></g><g transform="translate(713.2 101.7)"><path d="M4.4 2.8H12.8L8.6 7.2H0.2Z" fill="#f6f6f6" stroke="#1c1c1c" stroke-width=".8"/><path d="M9.799999999999999 11V8.4Q9.799999999999999 6 12.399999999999999 6Q14.799999999999999 6 14.799999999999999 8.2" fill="none" stroke="#f0c030" stroke-width="1.2"/><rect x="5.6" y="11" width="5.8" height="4.2" fill="#f0c030" stroke="#3a3000" stroke-width=".4"/><rect x="7.9" y="12.2" width="1.2" height="2" fill="#3a3020"/></g><g transform="translate(736.2 101.7)"><path d="M4.2 6.4H12.2L8.6 10.2H0.6Z" fill="#f6f6f6" stroke="#1c1c1c" stroke-width=".8"/><path d="M4.2 3.4H12.2L8.6 7.199999999999999H0.6Z" fill="#f6f6f6" stroke="#1c1c1c" stroke-width=".8"/><path d="M4.2 0.4H12.2L8.6 4.2H0.6Z" fill="#f6f6f6" stroke="#1c1c1c" stroke-width=".8"/><path d="M8.6 11.4L12.8 9.6L15 12.6L10.8 15.4Z" fill="#b5651d"/><path d="M12.8 9.6L15.4 7.6L16 8.6L15 12.6" fill="#e8e0d0" opacity=".0"/><path d="M13.2 10L15.6 7.4" stroke="#e8dcc8" stroke-width="1.2"/><path d="M8.6 11.4L10.8 15.4" stroke="#7a3c0c" stroke-width=".8"/></g><path d="M866 52H877.4L882.4 57V72H866Z" fill="url(#gbl)" stroke="#e6eefc" stroke-width=".6"/><path d="M877.4 52V57H882.4Z" fill="#eef4ff"/><rect x="855.2" y="61.6" width="18.6" height="12" fill="url(#gw)" stroke="#2b2b2b" stroke-width=".9"/><circle cx="873" cy="72.6" r="6.4" fill="url(#gw)" stroke="#2b2b2b" stroke-width=".9"/><path d="M873 72.6V67.4M873 72.6H878" stroke="#9aa0b2" stroke-width=".7"/><rect x="853.4000000000001" y="71.60000000000001" width="3.6" height="3.6" fill="#4a4a4a" stroke="#5fa2ff" stroke-width="1.1"/><g transform="translate(892 53.8)"><rect x="2" y="2.6" width="9" height="6.8" fill="url(#gw)" stroke="#2b2b2b" stroke-width=".7"/><circle cx="11.6" cy="9.6" r="3.6" fill="url(#gw)" stroke="#2b2b2b" stroke-width=".7"/><rect x="0.7000000000000002" y="8.3" width="3" height="3" fill="#4a4a4a" stroke="#5fa2ff" stroke-width="1.1"/></g><g transform="translate(892 77.8)"><rect x="2" y="5.6" width="8" height="6" fill="url(#gw)" stroke="#2b2b2b" stroke-width=".7"/><circle cx="9.6" cy="12" r="3.2" fill="url(#gw)" stroke="#2b2b2b" stroke-width=".7"/><path d="M13.4 0L9.2 5.4H11.8L10 9.4L15.6 3.6H12.8L14.6 0Z" fill="#ffae1a"/><rect x="0.5" y="10.5" width="3" height="3" fill="#4a4a4a" stroke="#5fa2ff" stroke-width="1.1"/></g><g transform="translate(892 101.5)"><path d="M0.4 0.6Q1 3.4 3.6 4.6" stroke="#222" stroke-width=".8" fill="none"/><path d="M3.4 4.4H11.6L14.2 7L9.4 13.4L3.4 8.6Z" fill="#f6f6f6" stroke="#222" stroke-width=".8"/><path d="M6 7.6L8.4 10.2L11.4 6" stroke="#333" stroke-width="1.3" fill="none"/><path d="M9.6 6.6L14 2L15.6 3.4L11.2 8Z" fill="#f2a51a"/><path d="M14 2L15 1L16 2L15.6 3.4Z" fill="#d9534f"/></g><rect x="988" y="53" width="19.6" height="28.4" fill="#f6f6f8" stroke="#c8c8cc" stroke-width=".8"/><rect x="990.6" y="55.4" width="10.2" height="10" fill="#3c6cc0" stroke="#27509a" stroke-width=".7"/><rect x="1002.6" y="55.2" width="2.8" height="10.4" fill="#b2b5be"/><path d="M990.6 70.6H1004M990.6 77.2H998" stroke="#3c4656" stroke-width="1"/><rect x="993" y="68.8" width="2" height="3.6" fill="#3c4656"/><path d="M1001 74.4Q1005 71.6 1008.6 72.6L1012.4 78Q1010 81.8 1005.4 82Q1002.4 79 1001 74.4Z" fill="#b5651d"/><path d="M1008.6 72.6L1010.6 71L1013.6 75.6L1012.4 78Z" fill="#8a4a12"/><path d="M1011.4 72.6L1015.6 69.2L1017 71.2L1012.8 74.8Z" fill="#e6e6e6" stroke="#555" stroke-width=".3"/><path d="M1032 61.2L1032.00 53.80A7.4 7.4 0 0 1 1038.41 57.50Z" fill="#f2d43a"/><path d="M1032 61.2L1038.41 57.50A7.4 7.4 0 0 1 1038.41 64.90Z" fill="#f07a28"/><path d="M1032 61.2L1038.41 64.90A7.4 7.4 0 0 1 1032.00 68.60Z" fill="#d83030"/><path d="M1032 61.2L1032.00 68.60A7.4 7.4 0 0 1 1025.59 64.90Z" fill="#9a3fc0"/><path d="M1032 61.2L1025.59 64.90A7.4 7.4 0 0 1 1025.59 57.50Z" fill="#3a62d8"/><path d="M1032 61.2L1025.59 57.50A7.4 7.4 0 0 1 1032.00 53.80Z" fill="#3aa84a"/><circle cx="1032" cy="61.2" r="7.4" fill="none" stroke="#333" stroke-width=".6"/><ellipse cx="1030.4" cy="58" rx="4.4" ry="2.6" fill="#fff" opacity=".35"/><rect x="1024" y="77.4" width="16" height="1.2" fill="#e0e0e0"/><rect x="1024" y="80.6" width="16" height="2.2" fill="#e0e0e0"/><rect x="1024" y="84.6" width="16" height="3.2" fill="#e0e0e0"/><rect x="1024" y="89.4" width="16" height="4" fill="#e0e0e0"/><path d="M1024 102.6H1040" stroke="#e0e0e0" stroke-width="1.2" stroke-dasharray="1.2 1.2"/><path d="M1024 106.2H1040" stroke="#e0e0e0" stroke-width="1.2" stroke-dasharray="4 1.4"/><path d="M1024 110H1040" stroke="#e0e0e0" stroke-width="1.2" stroke-dasharray="3 1.2 1.2 1.2"/><path d="M1024 113.8H1040" stroke="#e0e0e0" stroke-width="1.2" stroke-dasharray="2.2 1.6"/><rect x="1042.5" y="50.5" width="179" height="21.5" fill="url(#gcb)" stroke="#2d2d2d" stroke-width="1"/><path d="M1043.5 72.9H1221.5" stroke="#6e6e6e" stroke-width=".8" fill="none" opacity=".6"/><rect x="1042.5" y="74.5" width="179" height="21.5" fill="url(#gcb)" stroke="#2d2d2d" stroke-width="1"/><path d="M1043.5 96.9H1221.5" stroke="#6e6e6e" stroke-width=".8" fill="none" opacity=".6"/><rect x="1042.5" y="98.5" width="179" height="21.5" fill="url(#gcb)" stroke="#2d2d2d" stroke-width="1"/><path d="M1043.5 120.9H1221.5" stroke="#6e6e6e" stroke-width=".8" fill="none" opacity=".6"/><rect x="1055.4" y="53.6" width="15.4" height="15" fill="#fff" stroke="#3a3a3a" stroke-width=".7"/><path d="M1050.6 84.5H1109.8M1046 109.5H1109.8" stroke="#f4f4f4" stroke-width="1.1"/><rect x="1230.5" y="52.5" width="18" height="31.5" fill="none" stroke="#e8e8e8" stroke-width="1" stroke-dasharray="2 1.4"/><rect x="1234.6" y="57.2" width="10.4" height="9.4" fill="#e8dc78" stroke="#2a2a2a" stroke-width=".8"/><path d="M1241 73L1247.6 65.6" stroke="#222" stroke-width="1.1"/><circle cx="1239.4" cy="75.2" r="4.8" fill="url(#gw)" stroke="#2a2a2a" stroke-width=".9"/><circle cx="1250.6" cy="62.2" r="6.5" fill="#a8d4ff" opacity=".28"/><path d="M-11.5 0L0 -1.1L11.5 0L0 1.1Z" transform="translate(1250.6 62.2) rotate(-12)" fill="#e8f4ff"/><path d="M-9 0L0 -1.1L9 0L0 1.1Z" transform="translate(1250.6 62.2) rotate(40)" fill="#e8f4ff"/><path d="M-11 0L0 -1.1L11 0L0 1.1Z" transform="translate(1250.6 62.2) rotate(78)" fill="#e8f4ff"/><path d="M-9.5 0L0 -1.1L9.5 0L0 1.1Z" transform="translate(1250.6 62.2) rotate(128)" fill="#e8f4ff"/><path d="M-7 0L0 -1.1L7 0L0 1.1Z" transform="translate(1250.6 62.2) rotate(14)" fill="#e8f4ff"/><path d="M-6 0L0 -1.1L6 0L0 1.1Z" transform="translate(1250.6 62.2) rotate(58)" fill="#e8f4ff"/><path d="M-7 0L0 -1.1L7 0L0 1.1Z" transform="translate(1250.6 62.2) rotate(102)" fill="#e8f4ff"/><path d="M-7.5 0L0 -1.1L7.5 0L0 1.1Z" transform="translate(1250.6 62.2) rotate(152)" fill="#e8f4ff"/><circle cx="1250.6" cy="62.2" r="2.6" fill="#ffffff"/><circle cx="1250.6" cy="62.2" r="4.2" fill="#d4eaff" opacity=".55"/><g transform="translate(1270 52)"><path d="M0.6 0.6H8.4" stroke="#e0e0e0" stroke-width="1" stroke-dasharray="1.2 1"/><rect x="2.4" y="2.4" width="5" height="4.6" fill="#e8dc78" stroke="#333" stroke-width=".5"/><circle cx="4.6" cy="11.4" r="2.4" fill="url(#gw)" stroke="#333" stroke-width=".5"/><path d="M8.6 9.4L14 3.4L15.6 1.2L15.2 4.4L9.8 10.4Z" fill="#f0a020"/><path d="M8.6 9.4L9.8 10.4L8 11.4Z" fill="#d9534f"/></g><g transform="translate(1270 77)"><rect x="0.6" y="0.6" width="8" height="13.6" fill="none" stroke="#e0e0e0" stroke-width="1" stroke-dasharray="1.2 1"/><rect x="2.8" y="3" width="3.6" height="3.4" fill="#f4f4f4"/><circle cx="4.6" cy="10.4" r="2" fill="#3f6fd0" stroke="#cfe0ff" stroke-width=".5"/><path d="M10.6 4.6H15.4M13 2.2V7M10.8 10.6H15.4" stroke="#e8e8e8" stroke-width="1"/></g><rect x="1266.5" y="98.5" width="23" height="21.5" fill="url(#gsel)" stroke="#25375f" stroke-width="1"/><rect x="1267.5" y="99.5" width="21" height="19.5" fill="none" stroke="#9db4e0" stroke-width=".6" opacity=".6"/><g transform="translate(1270 101)"><path d="M0.8 1H8.6M0.8 1V15M0.8 15H6" stroke="#7fb0ff" stroke-width="1" stroke-dasharray="1.2 1" fill="none"/><rect x="2.8" y="3" width="3.8" height="3.6" fill="#e8dc78" stroke="#333" stroke-width=".4"/><rect x="2.8" y="9.4" width="3.8" height="3.6" fill="#e8ecf4" stroke="#333" stroke-width=".4"/><path d="M8.6 4.4L14.6 10.6L11.8 10.8L13.4 14.2L12 14.8L10.4 11.6L8.6 13.4Z" fill="#f6e06a" stroke="#222" stroke-width=".6"/></g><path d="M1303.6 59.6V68.6M1331.8 59.6V68.6" stroke="#f2f2f2" stroke-width="1.1"/><path d="M1305 64.4H1330.4M1308 62L1305 64.4L1308 66.8M1327.4 62L1330.4 64.4L1327.4 66.8" stroke="#f2f2f2" stroke-width="1" fill="none"/><rect x="1303.4" y="72" width="28.6" height="4.8" fill="#f4c820" stroke="#b98a00" stroke-width=".6"/><path d="M1306 72V74.4M1309 72V73.6M1312 72V74.4M1315 72V73.6M1318 72V74.4M1321 72V73.6M1324 72V74.4M1327 72V73.6M1330 72V74.4" stroke="#8a6200" stroke-width=".7"/><g transform="translate(1346 52.6)"><path d="M0 6.6H4.4M8.4 6.6H10M6.4 0.4V4.6M6.4 8.6V13" stroke="#f2f2f2" stroke-width="1"/><rect x="4.6" y="4.8" width="3.6" height="3.6" fill="none" stroke="#f2f2f2" stroke-width=".9"/><path d="M13.6 0L10.4 4.2H12.2L11 7.4L15.6 2.8H13.4L14.8 0Z" fill="#ffa51a"/><rect x="9.4" y="9.4" width="6.2" height="6.4" fill="#f4f4f4" stroke="#333" stroke-width=".5"/><path d="M9.4 11.6H15.6M9.4 13.8H15.6M11.6 9.4V15.8M13.6 9.4V15.8" stroke="#444" stroke-width=".6"/></g><g transform="translate(1346 76.6)"><path d="M0 8H16M8 0V16" stroke="#e4e4e4" stroke-width="1"/><circle cx="8" cy="8" r="2.6" fill="#5a5a5a" stroke="#e4e4e4" stroke-width=".9"/><path d="M6.6 8H9.4M8 6.6V9.4" stroke="#e4e4e4" stroke-width=".8"/></g><g transform="translate(1348.4 102.4)"><rect x="0.4" y="0.4" width="10" height="13.4" rx="1" fill="#f4f4f4" stroke="#2a2a2a" stroke-width=".8"/><rect x="1.8" y="2" width="7.2" height="2.6" fill="#7a8598"/><rect x="1.8" y="6.0" width="1.7" height="1.5" fill="#555e70"/><rect x="1.8" y="8.5" width="1.7" height="1.5" fill="#555e70"/><rect x="1.8" y="11.0" width="1.7" height="1.5" fill="#555e70"/><rect x="4.5" y="6.0" width="1.7" height="1.5" fill="#555e70"/><rect x="4.5" y="8.5" width="1.7" height="1.5" fill="#555e70"/><rect x="4.5" y="11.0" width="1.7" height="1.5" fill="#555e70"/><rect x="7.2" y="6.0" width="1.7" height="1.5" fill="#555e70"/><rect x="7.2" y="8.5" width="1.7" height="1.5" fill="#555e70"/><rect x="7.2" y="11.0" width="1.7" height="1.5" fill="#555e70"/></g><rect x="1382.6" y="54.4" width="20.6" height="24.6" rx="1.4" fill="url(#gtan)" stroke="#3a342c" stroke-width=".9"/><path d="M1387.4 56.4Q1387.4 52.4 1392.8 52.4Q1398.4 52.4 1398.4 56.4Z" fill="#f2f2f2" stroke="#555" stroke-width=".5"/><path d="M1390 60.4H1401L1406.4 65.6V81.4H1390Z" fill="url(#gw)" stroke="#262626" stroke-width=".9"/><path d="M1401 60.4V65.6H1406.4Z" fill="#fff" stroke="#262626" stroke-width=".6"/><g transform="translate(1422.6 53.4)"><path d="M1 0.6L9.4 10.4M13.6 0.6L5.2 10.4" stroke="#f4f4f4" stroke-width="1.8"/><circle cx="3" cy="12.4" r="2.2" fill="none" stroke="#2a2a2a" stroke-width="1.3"/><circle cx="11.6" cy="12.4" r="2.2" fill="none" stroke="#2a2a2a" stroke-width="1.3"/><path d="M4.6 10.8L6.6 8.6M10 10.8L8 8.6" stroke="#2a2a2a" stroke-width="1.2"/><circle cx="7.3" cy="7.8" r=".8" fill="#333"/></g><g transform="translate(1422 77.4)"><path d="M0.6 0.6H7.4L10 3.2V11H0.6Z" fill="#d8d8d8" stroke="#2a2a2a" stroke-width=".7"/><path d="M5 3.6H11.6L14.8 6.8V15H5Z" fill="url(#gw)" stroke="#2a2a2a" stroke-width=".7"/><path d="M11.6 3.6V6.8H14.8Z" fill="#fff" stroke="#2a2a2a" stroke-width=".5"/></g><path d="M1462.8 59H1472V65H1487.4V76.4H1462.8Z" fill="#222" opacity=".5" transform="translate(.5 .8)"/><path d="M1462.8 59H1472V65H1487.4V76.4H1462.8Z" fill="url(#gw)" stroke="#fafafa" stroke-width=".7"/></svg>
<span class="t" style="left:11px;top:87.8px;font-size:12px;line-height:16px;color:#f2f2f2;">直线</span>
<span class="t" style="left:45.5px;top:87.8px;font-size:12px;line-height:16px;color:#f2f2f2;">多段线</span>
<span class="t" style="left:97px;top:87.8px;font-size:12px;line-height:16px;color:#f2f2f2;">圆</span>
<span class="t" style="left:133px;top:87.8px;font-size:12px;line-height:16px;color:#f2f2f2;">圆弧</span>
<svg class="a" style="left:100.5px;top:106.65px;" width="6" height="3.5" viewBox="0 0 6 3.5"><path d="M0 0H6L3.0 3.5Z" fill="#f0f0f0"/></svg>
<svg class="a" style="left:142.5px;top:106.65px;" width="6" height="3.5" viewBox="0 0 6 3.5"><path d="M0 0H6L3.0 3.5Z" fill="#f0f0f0"/></svg>
<svg class="a" style="left:195.5px;top:59.55px;" width="6" height="3.5" viewBox="0 0 6 3.5"><path d="M0 0H6L3.0 3.5Z" fill="#f0f0f0"/></svg>
<svg class="a" style="left:195.5px;top:83.55px;" width="6" height="3.5" viewBox="0 0 6 3.5"><path d="M0 0H6L3.0 3.5Z" fill="#f0f0f0"/></svg>
<svg class="a" style="left:195.5px;top:107.55px;" width="6" height="3.5" viewBox="0 0 6 3.5"><path d="M0 0H6L3.0 3.5Z" fill="#f0f0f0"/></svg>
<span class="t" style="left:240px;top:54.1px;font-size:12px;line-height:16px;color:#f2f2f2;">移动</span>
<span class="t" style="left:299px;top:54.1px;font-size:12px;line-height:16px;color:#f2f2f2;">旋转</span>
<span class="t" style="left:358px;top:54.1px;font-size:12px;line-height:16px;color:#f2f2f2;">延伸</span>
<span class="t" style="left:240px;top:78.1px;font-size:12px;line-height:16px;color:#f2f2f2;">复制</span>
<span class="t" style="left:299px;top:78.1px;font-size:12px;line-height:16px;color:#f2f2f2;">镜像</span>
<span class="t" style="left:358px;top:78.1px;font-size:12px;line-height:16px;color:#f2f2f2;">圆角</span>
<span class="t" style="left:240px;top:102.1px;font-size:12px;line-height:16px;color:#f2f2f2;">拉伸</span>
<span class="t" style="left:299px;top:102.1px;font-size:12px;line-height:16px;color:#f2f2f2;">缩放</span>
<span class="t" style="left:358px;top:102.1px;font-size:12px;line-height:16px;color:#f2f2f2;">阵列</span>
<svg class="a" style="left:389.4px;top:59.75px;" width="6" height="3.5" viewBox="0 0 6 3.5"><path d="M0 0H6L3.0 3.5Z" fill="#f0f0f0"/></svg>
<svg class="a" style="left:393.5px;top:83.75px;" width="6" height="3.5" viewBox="0 0 6 3.5"><path d="M0 0H6L3.0 3.5Z" fill="#f0f0f0"/></svg>
<svg class="a" style="left:389.4px;top:107.75px;" width="6" height="3.5" viewBox="0 0 6 3.5"><path d="M0 0H6L3.0 3.5Z" fill="#f0f0f0"/></svg>
<span class="t" style="left:444.3px;width:40px;text-align:center;top:45.5px;font-size:38.5px;line-height:44px;color:#e2e2e2;">A</span>
<span class="t" style="left:452px;top:88.1px;font-size:12px;line-height:16px;color:#f2f2f2;">文字</span>
<svg class="a" style="left:461.4px;top:106.65px;" width="6" height="3.5" viewBox="0 0 6 3.5"><path d="M0 0H6L3.0 3.5Z" fill="#f0f0f0"/></svg>
<span class="t" style="left:494px;top:88.1px;font-size:12px;line-height:16px;color:#f2f2f2;">标注</span>
<span class="t" style="left:551px;top:54.1px;font-size:12px;line-height:16px;color:#f2f2f2;">线性</span>
<span class="t" style="left:551px;top:78.1px;font-size:12px;line-height:16px;color:#f2f2f2;">引线</span>
<span class="t" style="left:551px;top:102.1px;font-size:12px;line-height:16px;color:#f2f2f2;">表格</span>
<svg class="a" style="left:582.3px;top:59.65px;" width="6" height="3.5" viewBox="0 0 6 3.5"><path d="M0 0H6L3.0 3.5Z" fill="#f0f0f0"/></svg>
<svg class="a" style="left:582.3px;top:83.65px;" width="6" height="3.5" viewBox="0 0 6 3.5"><path d="M0 0H6L3.0 3.5Z" fill="#f0f0f0"/></svg>
<span class="t" style="left:604.3px;top:88.1px;font-size:12px;line-height:16px;color:#f2f2f2;">图层</span>
<span class="t" style="left:604.3px;top:105.1px;font-size:12px;line-height:16px;color:#f2f2f2;">特性</span>
<span class="t" style="left:718px;top:53.9px;font-size:12px;line-height:16px;color:#e8e8e8;">0</span>
<svg class="a" style="left:833.8px;top:58.75px;" width="8" height="4.5" viewBox="0 0 8 4.5"><path d="M0 0H8L4.0 4.5Z" fill="#f0f0f0"/></svg>
<span class="t" style="left:757.3px;top:78.1px;font-size:12px;line-height:16px;color:#f2f2f2;">置为当前</span>
<span class="t" style="left:757.3px;top:102.3px;font-size:12px;line-height:16px;color:#f2f2f2;">匹配图层</span>
<span class="t" style="left:856.2px;top:87.5px;font-size:12px;line-height:16px;color:#f2f2f2;">插入</span>
<svg class="a" style="left:865.4px;top:105.85px;" width="6" height="3.5" viewBox="0 0 6 3.5"><path d="M0 0H6L3.0 3.5Z" fill="#f0f0f0"/></svg>
<span class="t" style="left:913px;top:54.3px;font-size:12px;line-height:16px;color:#f2f2f2;">创建</span>
<span class="t" style="left:913px;top:78.3px;font-size:12px;line-height:16px;color:#f2f2f2;">编辑</span>
<span class="t" style="left:913px;top:102.3px;font-size:12px;line-height:16px;color:#f2f2f2;">编辑属性</span>
<svg class="a" style="left:968.4px;top:107.65px;" width="6" height="3.5" viewBox="0 0 6 3.5"><path d="M0 0H6L3.0 3.5Z" fill="#f0f0f0"/></svg>
<span class="t" style="left:990.2px;top:88.5px;font-size:12px;line-height:16px;color:#f2f2f2;">特性</span>
<span class="t" style="left:990.2px;top:105.3px;font-size:12px;line-height:16px;color:#f2f2f2;">匹配</span>
<span class="t" style="left:1081.4px;top:53.9px;font-size:12px;line-height:16px;color:#f2f2f2;">ByLayer</span>
<span class="t" style="left:1112.6px;top:77.9px;font-size:12px;line-height:16px;color:#f2f2f2;">ByLayer</span>
<span class="t" style="left:1112.6px;top:101.9px;font-size:12px;line-height:16px;color:#f2f2f2;">ByLayer</span>
<svg class="a" style="left:1211.7px;top:58.95px;" width="8" height="4.5" viewBox="0 0 8 4.5"><path d="M0 0H8L4.0 4.5Z" fill="#f0f0f0"/></svg>
<svg class="a" style="left:1211.7px;top:82.95px;" width="8" height="4.5" viewBox="0 0 8 4.5"><path d="M0 0H8L4.0 4.5Z" fill="#f0f0f0"/></svg>
<svg class="a" style="left:1211.7px;top:106.95px;" width="8" height="4.5" viewBox="0 0 8 4.5"><path d="M0 0H8L4.0 4.5Z" fill="#f0f0f0"/></svg>
<span class="t" style="left:1240.2px;top:88.5px;font-size:12px;line-height:16px;color:#f2f2f2;">组</span>
<span class="t" style="left:1306px;top:88.3px;font-size:12px;line-height:16px;color:#f2f2f2;">测量</span>
<svg class="a" style="left:1315.5px;top:106.65px;" width="6" height="3.5" viewBox="0 0 6 3.5"><path d="M0 0H6L3.0 3.5Z" fill="#f0f0f0"/></svg>
<span class="t" style="left:1382.2px;top:88.3px;font-size:12px;line-height:16px;color:#f2f2f2;">粘贴</span>
<svg class="a" style="left:1391.4px;top:106.65px;" width="6" height="3.5" viewBox="0 0 6 3.5"><path d="M0 0H6L3.0 3.5Z" fill="#f0f0f0"/></svg>
<span class="t" style="left:1463px;top:88.3px;font-size:12px;line-height:16px;color:#f2f2f2;">基点</span>
<svg class="a" style="left:1472.5px;top:106.65px;" width="6" height="3.5" viewBox="0 0 6 3.5"><path d="M0 0H6L3.0 3.5Z" fill="#f0f0f0"/></svg>
<svg class="a" style="left:0px;top:0px;" width="260" height="24" viewBox="0 0 260 24"><defs><linearGradient id="qw" x1="0" y1="0" x2="0" y2="1"><stop offset="0" stop-color="#ffffff"/><stop offset="1" stop-color="#c6cbdb"/></linearGradient></defs><path d="M51 6.6H60.6L65.4 11.2V17.8H51Z" fill="url(#qw)" stroke="#2a2a2a" stroke-width=".9"/><path d="M60.6 6.6V11.2H65.4" fill="#eef0f6" stroke="#2a2a2a" stroke-width=".7"/><path d="M74.4 15.8V6.4H79L80.4 8H86.6V10" fill="#8e949e" stroke="#2a2a2a" stroke-width=".8"/><path d="M74.4 15.8L78 10H89.8L86 15.8Z" fill="url(#qw)" stroke="#2a2a2a" stroke-width=".8"/><rect x="99.6" y="4.8" width="13.4" height="12.6" rx=".8" fill="#5a6478" stroke="#20242e" stroke-width=".9"/><rect x="102.0" y="5.4" width="8.6" height="5" fill="#f4f6fa"/><rect x="103.0" y="12.4" width="6.6" height="4.6" fill="#eceef4"/><rect x="104.0" y="13.2" width="1.8" height="3" fill="#3a4458"/><rect x="122.8" y="4.8" width="13.4" height="12.6" rx=".8" fill="#5a6478" stroke="#20242e" stroke-width=".9"/><rect x="125.2" y="5.4" width="8.6" height="5" fill="#f4f6fa"/><rect x="126.2" y="12.4" width="6.6" height="4.6" fill="#eceef4"/><rect x="127.2" y="13.2" width="1.8" height="3" fill="#3a4458"/><path d="M131.4 11.8L136 6.4L138 8L133.4 13.4L131 14.4Z" fill="#f2b020" stroke="#5a3c00" stroke-width=".5"/><path d="M136 6.4L137 5.2L139 6.8L138 8Z" fill="#e07a50"/><path d="M131.4 11.8L131 14.4L133.4 13.4Z" fill="#f4e4c0"/><rect x="149.6" y="4.6" width="9" height="5" fill="#f8f8f8" stroke="#444" stroke-width=".6"/><rect x="146.6" y="8.8" width="15" height="6.4" rx="1.2" fill="url(#qw)" stroke="#333" stroke-width=".8"/><rect x="149.4" y="13.4" width="9.4" height="4.8" fill="#cfe0f8" stroke="#444" stroke-width=".6"/><path d="M151 15.4H157.2" stroke="#7d9cc8" stroke-width=".8"/><path d="M0.2 5.8L6.8 0.2V3.4H11.4Q14.8 3.4 14.8 6.8V11.6H11V8.8Q11 8 10 8H6.8V11.4Z" transform="translate(170 5.8)" fill="#f4f4f6" stroke="#2a2a2a" stroke-width=".8"/><path d="M0.2 5.8L6.8 0.2V3.4H11.4Q14.8 3.4 14.8 6.8V11.6H11V8.8Q11 8 10 8H6.8V11.4Z" transform="translate(221.8 5.8) scale(-1 1)" fill="#8e8e8e" stroke="#707070" stroke-width=".6"/><path d="M192.6 9.6H199L195.8 13.2Z" fill="#ececec"/><path d="M228.2 9.6H234.6L231.4 13.2Z" fill="#b4b4b4"/><path d="M242 8.8H250.4" stroke="#f2f2f2" stroke-width="1.3"/><path d="M242 11.2H250.4L246.2 15.4Z" fill="#f2f2f2"/></svg>
<svg class="a" style="left:0px;top:0px;" width="1760" height="24" viewBox="0 0 1760 24"><g transform="translate(1508 4)"><path d="M1.6 14.6V8L3 2.6H5.8L6.6 8V14.6Z M8.6 14.6V8L9.4 2.6H12.2L13.6 8V14.6Z" fill="#f2f2f2" stroke="#222" stroke-width=".9"/><rect x="6.4" y="5.4" width="2.6" height="3" fill="#222"/><path d="M1.8 10.4H6.4M8.8 10.4H13.4" stroke="#555" stroke-width="1"/></g><g transform="translate(1532 3.6)"><path d="M0.8 15.6Q1 11.4 5.6 10.6Q3.6 8.6 3.8 5.4Q4.2 1 8 1Q11.8 1 12.2 5.4Q12.4 8.6 10.4 10.6Q15 11.4 15.2 15.6Z" fill="#f0f0f2" stroke="#222" stroke-width=".9"/><path d="M5.6 10.6Q8 13.4 10.4 10.6" fill="none" stroke="#8a8a90" stroke-width=".8"/></g><g transform="translate(1654 4)"><path d="M0.6 1.4H3.2L5.2 10.4H13.2L15 4H4" fill="none" stroke="#1e2a5a" stroke-width="2.8" stroke-linejoin="round"/><path d="M0.6 1.4H3.2L5.2 10.4H13.2L15 4H4" fill="none" stroke="#f4f4f8" stroke-width="1.5" stroke-linejoin="round"/><circle cx="6.4" cy="13.6" r="1.5" fill="#f4f4f8" stroke="#1e2a5a" stroke-width=".7"/><circle cx="12.2" cy="13.6" r="1.5" fill="#f4f4f8" stroke="#1e2a5a" stroke-width=".7"/></g><g transform="translate(1678 3.6)"><path d="M8 2.4L2.2 13.4H13.8Z" fill="none" stroke="#1e2a6a" stroke-width="3.2" stroke-linejoin="round"/><path d="M8 2.4L2.2 13.4H13.8Z" fill="none" stroke="#f2f2f8" stroke-width="1.8" stroke-linejoin="round"/><circle cx="8" cy="2.6" r="2" fill="#f2f2f8" stroke="#1e2a6a" stroke-width=".7"/><circle cx="2.4" cy="13.2" r="2" fill="#f2f2f8" stroke="#1e2a6a" stroke-width=".7"/><circle cx="13.6" cy="13.2" r="2" fill="#f2f2f8" stroke="#1e2a6a" stroke-width=".7"/></g><circle cx="1732.2" cy="11.8" r="7.6" fill="#f6f6f8" stroke="#1a1a1a" stroke-width="1"/></svg><span class="t" style="left:1728.6px;top:3.5px;font-size:13px;line-height:16px;color:#1e3cb4;font-weight:bold;">?</span>
<svg class="a" style="left:0px;top:0px;pointer-events:none;" width="1920" height="1040" viewBox="0 0 1920 1040"><path d="M1412.6 1017.4V1031.6" stroke="#2196ff" stroke-width="1.5"/><path d="M1415.6 1017.4V1031.6" stroke="#2196ff" stroke-width="1.5"/><path d="M1418.6 1017.4V1031.6" stroke="#2196ff" stroke-width="1.5"/><path d="M1421.6 1017.4V1031.6" stroke="#2196ff" stroke-width="1.5"/><path d="M1424.6 1017.4V1031.6" stroke="#2196ff" stroke-width="1.5"/><path d="M1411 1019.5H1426M1411 1022.5H1426M1411 1025.5H1426M1411 1028.5H1426" stroke="#2196ff" stroke-width=".9" stroke-dasharray="1 1"/><ellipse cx="1418.6" cy="1024.6" rx="9" ry="8.6" fill="#2196ff" opacity=".16"/><rect x="1435.0" y="1018.0" width="1.2" height="1.2" fill="#e4e4e4"/><rect x="1435.0" y="1021.1" width="1.2" height="1.2" fill="#e4e4e4"/><rect x="1435.0" y="1024.2" width="1.2" height="1.2" fill="#e4e4e4"/><rect x="1435.0" y="1027.3" width="1.2" height="1.2" fill="#e4e4e4"/><rect x="1435.0" y="1030.4" width="1.2" height="1.2" fill="#e4e4e4"/><rect x="1438.1" y="1018.0" width="1.2" height="1.2" fill="#e4e4e4"/><rect x="1438.1" y="1021.1" width="1.2" height="1.2" fill="#e4e4e4"/><rect x="1438.1" y="1024.2" width="1.2" height="1.2" fill="#e4e4e4"/><rect x="1438.1" y="1027.3" width="1.2" height="1.2" fill="#e4e4e4"/><rect x="1438.1" y="1030.4" width="1.2" height="1.2" fill="#e4e4e4"/><rect x="1441.2" y="1018.0" width="1.2" height="1.2" fill="#e4e4e4"/><rect x="1441.2" y="1021.1" width="1.2" height="1.2" fill="#e4e4e4"/><rect x="1441.2" y="1024.2" width="1.2" height="1.2" fill="#e4e4e4"/><rect x="1441.2" y="1027.3" width="1.2" height="1.2" fill="#e4e4e4"/><rect x="1441.2" y="1030.4" width="1.2" height="1.2" fill="#e4e4e4"/><rect x="1444.3" y="1018.0" width="1.2" height="1.2" fill="#e4e4e4"/><rect x="1444.3" y="1021.1" width="1.2" height="1.2" fill="#e4e4e4"/><rect x="1444.3" y="1024.2" width="1.2" height="1.2" fill="#e4e4e4"/><rect x="1444.3" y="1027.3" width="1.2" height="1.2" fill="#e4e4e4"/><rect x="1444.3" y="1030.4" width="1.2" height="1.2" fill="#e4e4e4"/><rect x="1447.4" y="1018.0" width="1.2" height="1.2" fill="#e4e4e4"/><rect x="1447.4" y="1021.1" width="1.2" height="1.2" fill="#e4e4e4"/><rect x="1447.4" y="1024.2" width="1.2" height="1.2" fill="#e4e4e4"/><rect x="1447.4" y="1027.3" width="1.2" height="1.2" fill="#e4e4e4"/><rect x="1447.4" y="1030.4" width="1.2" height="1.2" fill="#e4e4e4"/><path d="M1478.5 1018.6V1030.5H1491.2M1478.5 1027.5H1481.6V1030.5" stroke="#d6d6d6" stroke-width="1.1" fill="none"/><circle cx="1507.6" cy="1024.8" r="6.6" fill="none" stroke="#2196ff" stroke-width="1.5"/><path d="M1507.6 1024.8H1516.2M1507.6 1024.8L1514.4 1017.8" stroke="#2196ff" stroke-width="1.3"/><circle cx="1507.6" cy="1024.8" r="9" fill="#2196ff" opacity=".13"/><path d="M1547.4 1015.6V1034M1539.4 1017.2L1555.6 1032.8" stroke="#b8b8b8" stroke-width="1.1"/><circle cx="1547.4" cy="1025" r="1.3" fill="none" stroke="#b8b8b8" stroke-width=".7"/><path d="M1592.6 1018.2L1580 1031.6H1595.2" stroke="#2196ff" stroke-width="1.5" fill="none"/><rect x="1584.2" y="1023.2" width="3.2" height="3.2" fill="#2196ff"/><rect x="1605.4" y="1018.8" width="12.6" height="12.6" fill="none" stroke="#2196ff" stroke-width="1.5"/><rect x="1603.6" y="1017" width="4.4" height="4.4" fill="#00e020" stroke="#0a1a0a" stroke-width="1"/><g transform="translate(1645.4 1016)"><path d="M8 0.3L9.6 4.6Q10.4 6 9.4 7.4L9.2 9L10.2 10.4L16 16.9L13.2 17.2L8 13L2.8 17.2L0 16.9L5.8 10.4L6.8 9L6.6 7.4Q5.6 6 6.4 4.6Z" fill="none" stroke="#1b58b0" stroke-width="2.6" stroke-opacity=".55" stroke-linejoin="round"/><path d="M8 0.3L9.6 4.6Q10.4 6 9.4 7.4L9.2 9L10.2 10.4L16 16.9L13.2 17.2L8 13L2.8 17.2L0 16.9L5.8 10.4L6.8 9L6.6 7.4Q5.6 6 6.4 4.6Z" fill="#2196ff"/><circle cx="11.8" cy="4.4" r="3.6" fill="#1b58b0" opacity=".5"/><circle cx="11.8" cy="4.4" r="2.5" fill="#2a4c86" stroke="#2196ff" stroke-width="1.3"/></g><g transform="translate(1669.2 1016)"><path d="M8 0.3L9.6 4.6Q10.4 6 9.4 7.4L9.2 9L10.2 10.4L16 16.9L13.2 17.2L8 13L2.8 17.2L0 16.9L5.8 10.4L6.8 9L6.6 7.4Q5.6 6 6.4 4.6Z" fill="#d2d2d2"/><path d="M9 6.5L13.4 1.2L12.4 4.6L14.6 4.6L10.4 10.2L11.4 6.6Z" fill="#d8d8d8" stroke="#555" stroke-width=".7"/></g><g transform="translate(1693 1016)"><path d="M8 0.3L9.6 4.6Q10.4 6 9.4 7.4L9.2 9L10.2 10.4L16 16.9L13.2 17.2L8 13L2.8 17.2L0 16.9L5.8 10.4L6.8 9L6.6 7.4Q5.6 6 6.4 4.6Z" fill="#d2d2d2"/></g><rect x="-1.3" y="-6.3" width="2.6" height="2.4" transform="translate(1760.8 1024.8) rotate(0)" fill="#c8c8c8"/><rect x="-1.3" y="-6.3" width="2.6" height="2.4" transform="translate(1760.8 1024.8) rotate(45)" fill="#c8c8c8"/><rect x="-1.3" y="-6.3" width="2.6" height="2.4" transform="translate(1760.8 1024.8) rotate(90)" fill="#c8c8c8"/><rect x="-1.3" y="-6.3" width="2.6" height="2.4" transform="translate(1760.8 1024.8) rotate(135)" fill="#c8c8c8"/><rect x="-1.3" y="-6.3" width="2.6" height="2.4" transform="translate(1760.8 1024.8) rotate(180)" fill="#c8c8c8"/><rect x="-1.3" y="-6.3" width="2.6" height="2.4" transform="translate(1760.8 1024.8) rotate(225)" fill="#c8c8c8"/><rect x="-1.3" y="-6.3" width="2.6" height="2.4" transform="translate(1760.8 1024.8) rotate(270)" fill="#c8c8c8"/><rect x="-1.3" y="-6.3" width="2.6" height="2.4" transform="translate(1760.8 1024.8) rotate(315)" fill="#c8c8c8"/><circle cx="1760.8" cy="1024.8" r="5.1" fill="#c8c8c8"/><circle cx="1760.8" cy="1024.8" r="1.7" fill="#575757"/><path d="M1794 1025H1808M1801 1018V1032" stroke="#e0e0e0" stroke-width="1.5"/><rect x="1820.4" y="1017.6" width="6" height="6" fill="none" stroke="#d4d4d4" stroke-width="1"/><circle cx="1831.6" cy="1023.6" r="3.2" fill="none" stroke="#d4d4d4" stroke-width="1"/><path d="M1826.2 1026.6L1829.4 1031.6H1823Z" fill="none" stroke="#d4d4d4" stroke-width="1"/><circle cx="1855.2" cy="1025" r="9" fill="#2196ff" opacity=".18"/><circle cx="1855.2" cy="1025" r="7.2" fill="#0b4f9e" stroke="#1c86ff" stroke-width="1.5"/><path d="M1854.4 1027L1858.2 1024" stroke="#3aa0ff" stroke-width="1.3"/><rect x="1874.6" y="1019.4" width="14.6" height="11" fill="none" stroke="#dcdcdc" stroke-width="1.1"/><path d="M1883 1024L1886.6 1021.4M1884 1021.2H1887V1024M1880.8 1026L1877.2 1028.6M1877 1025.8V1028.8H1880" stroke="#dcdcdc" stroke-width="1" fill="none"/><path d="M1899.4 1020.2H1914.2M1899.4 1025H1914.2M1899.4 1029.8H1914.2" stroke="#dcdcdc" stroke-width="1.6"/><path d="M1458.0 1023.2H1465.1999999999998L1461.6 1027.4Z" fill="#f2f2f2"/><path d="M1523.6000000000001 1023.2H1530.8L1527.2 1027.4Z" fill="#f2f2f2"/><path d="M1562.8000000000002 1023.2H1570.0L1566.4 1027.4Z" fill="#f2f2f2"/><path d="M1627.0 1023.2H1634.1999999999998L1630.6 1027.4Z" fill="#f2f2f2"/><path d="M1735.3000000000002 1023.2H1742.5L1738.9 1027.4Z" fill="#f2f2f2"/><path d="M1777.1000000000001 1023.2H1784.3L1780.7 1027.4Z" fill="#f2f2f2"/></svg><span class="t" style="left:1716.6px;top:1016.8px;font-size:11.5px;line-height:16px;color:#f4f4f4;font-weight:bold;letter-spacing:-0.9px;">1:1</span>
<svg class="a" style="left:0px;top:0px;pointer-events:none;" width="1920" height="1080" viewBox="0 0 1920 1080"><defs><linearGradient id="edg" x1="0" y1="0" x2="1" y2="1"><stop offset="0" stop-color="#35c1f1"/><stop offset=".5" stop-color="#1b7fd6"/><stop offset="1" stop-color="#0c55a8"/></linearGradient><linearGradient id="edg2" x1="0" y1="1" x2="1" y2="0"><stop offset="0" stop-color="#2aa5e0"/><stop offset="1" stop-color="#6fdc4c"/></linearGradient><linearGradient id="wps" x1="0" y1="0" x2="1" y2="1"><stop offset="0" stop-color="#ff2a1a"/><stop offset="1" stop-color="#ff6a2a"/></linearGradient><linearGradient id="mm" x1="0" y1="0" x2="0" y2="1"><stop offset="0" stop-color="#9b6bf0"/><stop offset="1" stop-color="#5a4ad8"/></linearGradient><linearGradient id="np" x1="0" y1="0" x2="1" y2="1"><stop offset="0" stop-color="#e8f8fc"/><stop offset="1" stop-color="#6fb4c8"/></linearGradient></defs><g transform="translate(503 1048)"><circle cx="12" cy="12" r="11.6" fill="url(#edg)"/><path d="M1 9.6Q3.4 0.6 12.6 0.4Q22.6 1 23.6 10.4Q23.4 15 18 15.4H13Q15 13.6 14.6 11.4Q13.6 8.2 10 8Q4.6 8 1 9.6Z" fill="url(#edg2)"/><path d="M6.6 12.6Q6 19.6 13.4 23.4Q6.6 24 2.4 18Q0.6 14.6 1 9.6Q4 8.4 6.6 12.6Z" fill="#1565b8"/><path d="M10.2 11.8Q8.4 17.6 14.4 20.6Q18.8 21.6 21.6 18.2Q17.4 20 14.4 17.4Q12.6 15.4 13.6 13.6Q12.4 11.4 10.2 11.8Z" fill="#0e4a94"/></g><g transform="translate(552 1049)"><path d="M1 3.4Q1 2 2.4 2H8L10 4H21.6Q23 4 23 5.4V19.6H1Z" fill="#f0b429"/><path d="M1 6.4H23V19Q23 20.4 21.6 20.4H2.4Q1 20.4 1 19Z" fill="#ffd75e"/><path d="M6.4 20.4V14.2Q6.4 13.2 7.4 13.2H16.6Q17.6 13.2 17.6 14.2V20.4H14.6V16.4H9.4V20.4Z" fill="#3f8fe0"/></g><g transform="translate(600.6 1048)"><circle cx="12" cy="12" r="11.6" fill="#2a9fc9"/><rect x="5.4" y="5.6" width="13.4" height="9.4" fill="#1c6f96" stroke="#fff" stroke-width="1"/><path d="M9.6 8L14.4 12.6M14.4 8L9.6 12.6" stroke="#fff" stroke-width="1.2"/><path d="M12 15V17.6M8.4 18H15.8" stroke="#fff" stroke-width="1.2"/><path d="M6 20.6H18" stroke="#fff" stroke-width=".9"/></g><g transform="translate(649 1048)"><path d="M8 2L21 3.6L18.4 21.4L3 19.4Z" fill="url(#np)" stroke="#4a8ea6" stroke-width=".6"/><path d="M8 2L21 3.6L20.6 6L7.4 4.4Z" fill="#5aa6c0"/><path d="M18.4 21.4L21 3.6L22.4 5L19.8 22.4Z" fill="#c8a25a"/><path d="M3 19.4L18.4 21.4L17.6 22.8L2.6 20.8Z" fill="#d8dde2"/></g><g transform="translate(698 1048)"><rect x="5" y="3.6" width="16.6" height="12.6" rx="1" fill="#e4e8ee" stroke="#8a929e" stroke-width=".8"/><rect x="6.8" y="5.4" width="13" height="9" fill="#f8fbff"/><path d="M7.4 12L9.6 10L11 12.6L12.6 7L14.4 12.4L16 9.4L17.6 11.6L19.4 10.4" stroke="#2a7fd8" stroke-width="1" fill="none"/><path d="M11.6 16.4H15L16 19.6H10.6Z" fill="#c4c9d2"/><ellipse cx="13.2" cy="20.4" rx="5.4" ry="1.6" fill="#d4d8e0"/><rect x="2.4" y="6.4" width="3.4" height="10.6" fill="#c8ccd4" stroke="#8a929e" stroke-width=".5"/><rect x="3" y="8" width="1.4" height="1.2" fill="#3ac83a"/></g><g transform="translate(747.6 1049)"><path d="M0.8 3.4H6.6L9.4 13.4L12 5.6L10.6 3.4H17L15 9.6L17.4 13.6L19.4 3.4H24L19.6 18.4Q19 20.4 17.2 20.4Q15.4 20.4 14.6 18.6L12.4 13.4L10.2 19Q9.6 20.4 7.8 20.4Q6 20.4 5.4 18.4Z" fill="url(#wps)"/></g><g transform="translate(797 1048)"><rect x="0" y="0" width="24" height="24" fill="#fbe6e0"/><rect x="0" y="0" width="24" height="9" fill="#f6d4cc" opacity=".6"/><path d="M10 3H14.4L21 21H16.8L15.2 16.4H8.4Q7 17.6 6.6 21.2H3Z M12 7.4L9.4 13.6H14.2Z" fill="#c21a20"/><path d="M4.6 17Q9 12.4 19 16.4L19.6 18.2Q10 14.8 5.6 19.2Z" fill="#96121a"/></g><g transform="translate(845.6 1048)"><path d="M4.6 17.4Q1.4 14 2.2 9.4Q3.6 3.4 10.6 3Q17 3 19 8.4" fill="none" stroke="#2a9df4" stroke-width="2.2"/><path d="M4.8 16.6L4.2 20.8L8.6 19.4Q11 20.2 13 19.6" fill="none" stroke="#2a9df4" stroke-width="2"/><circle cx="17" cy="11" r="1.9" fill="#3ac84a"/><circle cx="20.6" cy="15.6" r="1.8" fill="#2a9df4"/><circle cx="17" cy="20" r="1.9" fill="#f2901a"/><circle cx="13.4" cy="15.6" r="1.8" fill="#f2c81a"/><path d="M15 13.4L19 13.4L19 17.8L15 17.8Z" fill="#f2c81a" opacity=".0"/></g><g transform="translate(894.6 1048)"><path d="M1.6 20L8 7.6Q9 6.4 10 7.6L13.4 13.4L15.8 10Q16.8 9 17.8 10L22.8 20Z" fill="url(#mm)"/><path d="M8.4 20L13.4 13.4L17.2 20Z" fill="#7b5ce6" opacity=".7"/><circle cx="15.4" cy="4" r="2.6" fill="#ffb31a"/></g><g transform="translate(943 1048)"><path d="M9.4 2.4Q16.6 2.6 17.4 8.6Q17 14.6 9.4 14.8Q7.6 14.8 6.4 14.4L3.4 16L4 13.2Q1.2 11.4 1.4 8.4Q2.2 2.6 9.4 2.4Z" fill="#2dc84a"/><path d="M17 9.4Q22.8 9.6 23.4 14.4Q23.2 16.8 21 18.2L21.6 20.6L19 19.2Q18 19.4 17 19.4Q11 19.2 10.6 14.4Q11 9.6 17 9.4Z" fill="#ececec"/><circle cx="6.6" cy="7" r="1" fill="#1a7a2c"/><circle cx="12" cy="7" r="1" fill="#1a7a2c"/><circle cx="15" cy="13" r=".9" fill="#8a8a8a"/><circle cx="19" cy="13" r=".9" fill="#8a8a8a"/></g><g transform="translate(1520 1050)"><path d="M5.2 18.6Q0.8 18.4 0.6 14.4Q0.8 10.8 4.6 10.4Q5.6 5.6 10.4 5.4Q14.4 5.6 15.8 9.4Q20.8 9.4 21.2 14Q21 18.4 16.8 18.6Z" fill="#cfe6fb" stroke="#8ec4f0" stroke-width=".6"/><path d="M15.6 1.2H18.2L17.6 9H16.2Z" fill="#e81c2c"/><circle cx="16.9" cy="11.4" r="1.4" fill="#e81c2c"/></g><path d="M1622 1064.4L1628 1058.2L1634 1064.4" stroke="#f4f4f4" stroke-width="1.3" fill="none"/><g transform="translate(1643.6 1051.6)"><path d="M6.6 1.4Q11.8 1.6 12.2 6Q12 10.4 6.6 10.6Q5.4 10.6 4.6 10.4L2.4 11.4L2.8 9.4Q0.8 8 1 6Q1.4 1.6 6.6 1.4Z" fill="#2dc84a"/><path d="M12 6.6Q16.2 6.8 16.6 10.2Q16.4 12 14.8 13L15.2 14.6L13.4 13.6Q12.8 13.8 12 13.8Q7.8 13.6 7.4 10.2Q7.8 6.8 12 6.6Z" fill="#e4e4e4"/></g><g transform="translate(1669 1052)"><path d="M2 14.4Q2.6 7 10 5.4" stroke="#8a96a8" stroke-width="1.1" fill="none"/><path d="M4.6 14.4Q5.2 9 10.6 7.8" stroke="#c8d0dc" stroke-width="1.1" fill="none"/><path d="M7.2 14.4Q7.8 11 11.2 10.2" stroke="#f4f4f4" stroke-width="1.1" fill="none"/><circle cx="11.2" cy="13.6" r="1.2" fill="#f4f4f4"/></g><g transform="translate(1690.6 1052.4)"><path d="M1 5.4H3.6L7 2V13.4L3.6 10H1Z" fill="none" stroke="#f4f4f4" stroke-width="1.1"/><path d="M9.6 5.4L14 9.8M14 5.4L9.6 9.8" stroke="#f4f4f4" stroke-width="1.1"/></g><g transform="translate(1714.6 1053)"><rect x="3.6" y="3.4" width="12.6" height="7.6" fill="none" stroke="#f4f4f4" stroke-width="1.1"/><rect x="16.4" y="5.6" width="1.4" height="3.2" fill="#f4f4f4"/><rect x="5" y="4.8" width="3" height="4.8" fill="#f4f4f4"/><path d="M0.4 2.6H3.4V5.4Q3.4 7 1.9 7Q0.4 7 0.4 5.4Z" fill="#f4f4f4"/><path d="M1.9 7V9.6M1.2 0.8V2.6M2.6 0.8V2.6" stroke="#f4f4f4" stroke-width=".8"/></g><rect x="1768.6" y="1053" width="15" height="14" fill="#f8f8f8"/><g transform="translate(1879 1050)"><path d="M1 1.6H16.6V13.4H7.6L4.4 16.6V13.4H1Z" fill="#f8f8f8"/><path d="M3.6 4.8H14M3.6 7.6H14M3.6 10.4H9.6" stroke="#182238" stroke-width="1"/><circle cx="15.6" cy="17.6" r="7" fill="#2a2d34" stroke="#7a7e86" stroke-width=".9"/></g><rect x="1915" y="1044" width="1" height="36" fill="#66707e"/></svg><span class="t" style="left:1551.4px;top:1051px;font-size:14.5px;line-height:18px;color:#fff;letter-spacing:-0.3px;">23°C</span><span class="t" style="left:1591.4px;top:1051.5px;font-size:14px;line-height:18px;color:#ffffff;">阴</span><span class="t" style="left:1740.4px;top:1051.5px;font-size:14px;line-height:18px;color:#ffffff;">英</span><span class="t" style="left:1770px;top:1051.5px;font-size:12px;line-height:18px;color:#000000;">拼</span><span class="t" style="left:1815px;top:1042.5px;font-size:12.5px;line-height:16px;color:#fff;">23:52</span><span class="t" style="left:1801.6px;top:1061.5px;font-size:12.5px;line-height:16px;color:#fff;letter-spacing:0.25px;">2022/5/18</span><span class="t" style="left:1891px;top:1060.4px;font-size:12.5px;line-height:14px;color:#fff;font-weight:bold;">4</span>
</body></html>
